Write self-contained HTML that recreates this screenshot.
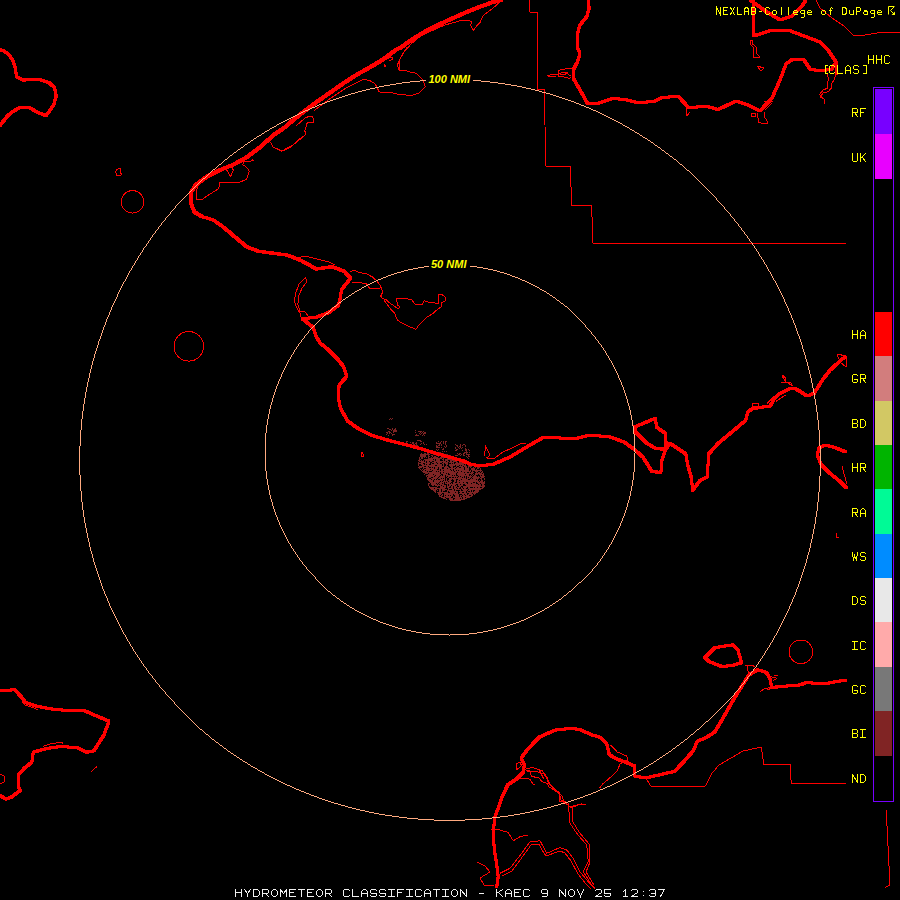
<!DOCTYPE html>
<html><head><meta charset="utf-8"><style>
html,body{margin:0;padding:0;background:#000;width:900px;height:900px;overflow:hidden;position:relative}
</style></head><body>
<svg width="900" height="900" viewBox="0 0 900 900" style="position:absolute;left:0;top:0"><path d="M435,452h3v1h-3zM439,452h2v1h-2zM464,452h4v1h-4zM469,452h1v1h-1zM421,453h1v1h-1zM424,453h2v1h-2zM427,453h2v1h-2zM430,453h4v1h-4zM435,453h2v1h-2zM440,453h4v1h-4zM457,453h1v1h-1zM459,453h2v1h-2zM463,453h2v1h-2zM466,453h1v1h-1zM420,454h10v1h-10zM433,454h2v1h-2zM436,454h1v1h-1zM438,454h7v1h-7zM446,454h2v1h-2zM458,454h2v1h-2zM461,454h1v1h-1zM463,454h1v1h-1zM466,454h4v1h-4zM420,455h6v1h-6zM428,455h1v1h-1zM431,455h2v1h-2zM436,455h2v1h-2zM441,455h1v1h-1zM444,455h2v1h-2zM447,455h4v1h-4zM455,455h3v1h-3zM460,455h1v1h-1zM463,455h2v1h-2zM468,455h1v1h-1zM420,456h6v1h-6zM428,456h2v1h-2zM432,456h1v1h-1zM434,456h2v1h-2zM438,456h1v1h-1zM441,456h7v1h-7zM449,456h2v1h-2zM452,456h1v1h-1zM466,456h1v1h-1zM468,456h2v1h-2zM419,457h1v1h-1zM421,457h2v1h-2zM424,457h1v1h-1zM426,457h1v1h-1zM428,457h1v1h-1zM431,457h1v1h-1zM433,457h5v1h-5zM440,457h7v1h-7zM448,457h1v1h-1zM450,457h2v1h-2zM454,457h1v1h-1zM456,457h1v1h-1zM467,457h1v1h-1zM419,458h1v1h-1zM421,458h2v1h-2zM428,458h14v1h-14zM443,458h1v1h-1zM447,458h2v1h-2zM450,458h4v1h-4zM455,458h3v1h-3zM468,458h1v1h-1zM419,459h2v1h-2zM424,459h9v1h-9zM434,459h1v1h-1zM436,459h4v1h-4zM442,459h2v1h-2zM445,459h8v1h-8zM454,459h3v1h-3zM458,459h3v1h-3zM418,460h2v1h-2zM421,460h1v1h-1zM423,460h1v1h-1zM425,460h10v1h-10zM436,460h4v1h-4zM443,460h1v1h-1zM445,460h3v1h-3zM450,460h8v1h-8zM459,460h1v1h-1zM462,460h2v1h-2zM419,461h5v1h-5zM425,461h1v1h-1zM427,461h2v1h-2zM430,461h2v1h-2zM434,461h12v1h-12zM447,461h2v1h-2zM450,461h2v1h-2zM453,461h4v1h-4zM461,461h3v1h-3zM465,461h2v1h-2zM418,462h1v1h-1zM421,462h5v1h-5zM427,462h3v1h-3zM432,462h4v1h-4zM437,462h5v1h-5zM443,462h5v1h-5zM449,462h5v1h-5zM456,462h2v1h-2zM459,462h3v1h-3zM464,462h4v1h-4zM418,463h5v1h-5zM425,463h5v1h-5zM431,463h1v1h-1zM434,463h3v1h-3zM438,463h2v1h-2zM442,463h2v1h-2zM445,463h3v1h-3zM451,463h1v1h-1zM453,463h1v1h-1zM455,463h14v1h-14zM470,463h2v1h-2zM418,464h1v1h-1zM421,464h3v1h-3zM425,464h1v1h-1zM427,464h2v1h-2zM431,464h11v1h-11zM443,464h1v1h-1zM446,464h2v1h-2zM449,464h15v1h-15zM465,464h1v1h-1zM467,464h2v1h-2zM470,464h4v1h-4zM418,465h1v1h-1zM422,465h13v1h-13zM437,465h5v1h-5zM443,465h1v1h-1zM446,465h1v1h-1zM449,465h6v1h-6zM456,465h3v1h-3zM460,465h1v1h-1zM462,465h4v1h-4zM468,465h3v1h-3zM472,465h1v1h-1zM474,465h2v1h-2zM419,466h5v1h-5zM426,466h2v1h-2zM429,466h15v1h-15zM445,466h3v1h-3zM450,466h3v1h-3zM456,466h1v1h-1zM459,466h4v1h-4zM464,466h3v1h-3zM468,466h4v1h-4zM475,466h4v1h-4zM418,467h4v1h-4zM423,467h6v1h-6zM431,467h1v1h-1zM433,467h1v1h-1zM435,467h3v1h-3zM439,467h3v1h-3zM444,467h5v1h-5zM451,467h2v1h-2zM454,467h2v1h-2zM457,467h2v1h-2zM461,467h3v1h-3zM465,467h2v1h-2zM468,467h1v1h-1zM470,467h1v1h-1zM473,467h1v1h-1zM475,467h1v1h-1zM477,467h3v1h-3zM419,468h1v1h-1zM423,468h1v1h-1zM426,468h8v1h-8zM435,468h3v1h-3zM439,468h3v1h-3zM444,468h3v1h-3zM448,468h7v1h-7zM456,468h8v1h-8zM465,468h4v1h-4zM471,468h4v1h-4zM477,468h2v1h-2zM480,468h1v1h-1zM420,469h1v1h-1zM422,469h1v1h-1zM424,469h6v1h-6zM431,469h6v1h-6zM439,469h1v1h-1zM441,469h9v1h-9zM451,469h2v1h-2zM454,469h10v1h-10zM465,469h4v1h-4zM471,469h4v1h-4zM476,469h1v1h-1zM480,469h1v1h-1zM421,470h1v1h-1zM423,470h2v1h-2zM426,470h6v1h-6zM433,470h7v1h-7zM441,470h2v1h-2zM444,470h7v1h-7zM452,470h1v1h-1zM454,470h2v1h-2zM457,470h1v1h-1zM459,470h10v1h-10zM470,470h1v1h-1zM472,470h10v1h-10zM422,471h5v1h-5zM428,471h1v1h-1zM432,471h4v1h-4zM437,471h1v1h-1zM439,471h15v1h-15zM455,471h6v1h-6zM462,471h9v1h-9zM472,471h1v1h-1zM475,471h3v1h-3zM480,471h1v1h-1zM482,471h1v1h-1zM423,472h17v1h-17zM441,472h2v1h-2zM444,472h13v1h-13zM458,472h6v1h-6zM465,472h2v1h-2zM469,472h1v1h-1zM471,472h3v1h-3zM476,472h1v1h-1zM478,472h2v1h-2zM481,472h2v1h-2zM425,473h3v1h-3zM429,473h11v1h-11zM441,473h5v1h-5zM447,473h1v1h-1zM449,473h7v1h-7zM457,473h16v1h-16zM475,473h7v1h-7zM483,473h1v1h-1zM424,474h1v1h-1zM428,474h5v1h-5zM434,474h7v1h-7zM443,474h5v1h-5zM450,474h6v1h-6zM457,474h8v1h-8zM466,474h3v1h-3zM471,474h1v1h-1zM473,474h1v1h-1zM475,474h3v1h-3zM479,474h5v1h-5zM426,475h9v1h-9zM436,475h4v1h-4zM441,475h1v1h-1zM443,475h2v1h-2zM446,475h6v1h-6zM453,475h1v1h-1zM455,475h1v1h-1zM458,475h11v1h-11zM470,475h1v1h-1zM472,475h1v1h-1zM474,475h2v1h-2zM480,475h1v1h-1zM482,475h2v1h-2zM426,476h1v1h-1zM428,476h6v1h-6zM435,476h4v1h-4zM440,476h5v1h-5zM446,476h1v1h-1zM448,476h10v1h-10zM459,476h1v1h-1zM461,476h3v1h-3zM465,476h1v1h-1zM467,476h5v1h-5zM473,476h4v1h-4zM478,476h1v1h-1zM480,476h5v1h-5zM427,477h4v1h-4zM433,477h5v1h-5zM439,477h6v1h-6zM447,477h2v1h-2zM451,477h1v1h-1zM454,477h1v1h-1zM456,477h1v1h-1zM458,477h4v1h-4zM463,477h1v1h-1zM465,477h1v1h-1zM467,477h1v1h-1zM469,477h2v1h-2zM472,477h8v1h-8zM481,477h3v1h-3zM427,478h2v1h-2zM431,478h6v1h-6zM438,478h3v1h-3zM442,478h1v1h-1zM444,478h1v1h-1zM446,478h1v1h-1zM449,478h17v1h-17zM467,478h3v1h-3zM471,478h1v1h-1zM473,478h6v1h-6zM480,478h2v1h-2zM484,478h1v1h-1zM427,479h4v1h-4zM432,479h2v1h-2zM435,479h1v1h-1zM437,479h1v1h-1zM440,479h5v1h-5zM446,479h1v1h-1zM449,479h3v1h-3zM453,479h3v1h-3zM458,479h3v1h-3zM462,479h6v1h-6zM470,479h6v1h-6zM477,479h1v1h-1zM481,479h1v1h-1zM484,479h1v1h-1zM428,480h5v1h-5zM434,480h9v1h-9zM444,480h1v1h-1zM446,480h1v1h-1zM448,480h3v1h-3zM454,480h2v1h-2zM457,480h2v1h-2zM460,480h18v1h-18zM479,480h1v1h-1zM481,480h2v1h-2zM429,481h4v1h-4zM434,481h6v1h-6zM441,481h1v1h-1zM443,481h5v1h-5zM449,481h3v1h-3zM454,481h2v1h-2zM457,481h22v1h-22zM480,481h3v1h-3zM484,481h1v1h-1zM430,482h9v1h-9zM440,482h4v1h-4zM445,482h1v1h-1zM447,482h4v1h-4zM453,482h2v1h-2zM457,482h2v1h-2zM460,482h3v1h-3zM464,482h2v1h-2zM468,482h5v1h-5zM475,482h1v1h-1zM477,482h8v1h-8zM428,483h2v1h-2zM431,483h5v1h-5zM437,483h1v1h-1zM439,483h3v1h-3zM443,483h1v1h-1zM445,483h5v1h-5zM451,483h1v1h-1zM453,483h14v1h-14zM468,483h3v1h-3zM472,483h4v1h-4zM478,483h2v1h-2zM481,483h4v1h-4zM428,484h1v1h-1zM431,484h6v1h-6zM438,484h1v1h-1zM440,484h4v1h-4zM447,484h1v1h-1zM449,484h7v1h-7zM458,484h2v1h-2zM461,484h2v1h-2zM465,484h13v1h-13zM479,484h2v1h-2zM482,484h2v1h-2zM428,485h1v1h-1zM432,485h2v1h-2zM435,485h6v1h-6zM442,485h4v1h-4zM447,485h1v1h-1zM449,485h2v1h-2zM452,485h3v1h-3zM456,485h1v1h-1zM458,485h5v1h-5zM466,485h15v1h-15zM482,485h3v1h-3zM429,486h1v1h-1zM437,486h1v1h-1zM440,486h3v1h-3zM444,486h2v1h-2zM447,486h3v1h-3zM451,486h2v1h-2zM454,486h3v1h-3zM459,486h2v1h-2zM463,486h22v1h-22zM429,487h8v1h-8zM440,487h6v1h-6zM447,487h2v1h-2zM451,487h2v1h-2zM454,487h2v1h-2zM457,487h3v1h-3zM461,487h1v1h-1zM463,487h4v1h-4zM468,487h2v1h-2zM473,487h1v1h-1zM475,487h2v1h-2zM478,487h2v1h-2zM482,487h2v1h-2zM430,488h4v1h-4zM435,488h10v1h-10zM448,488h5v1h-5zM454,488h3v1h-3zM458,488h1v1h-1zM461,488h2v1h-2zM464,488h2v1h-2zM468,488h15v1h-15zM431,489h6v1h-6zM439,489h2v1h-2zM442,489h5v1h-5zM448,489h1v1h-1zM452,489h2v1h-2zM455,489h6v1h-6zM462,489h6v1h-6zM469,489h12v1h-12zM433,490h3v1h-3zM437,490h1v1h-1zM439,490h2v1h-2zM442,490h3v1h-3zM447,490h7v1h-7zM455,490h1v1h-1zM460,490h1v1h-1zM463,490h4v1h-4zM468,490h3v1h-3zM472,490h1v1h-1zM475,490h4v1h-4zM434,491h2v1h-2zM439,491h2v1h-2zM442,491h1v1h-1zM447,491h1v1h-1zM449,491h9v1h-9zM459,491h7v1h-7zM467,491h1v1h-1zM470,491h1v1h-1zM472,491h1v1h-1zM474,491h5v1h-5zM435,492h1v1h-1zM437,492h11v1h-11zM450,492h5v1h-5zM456,492h2v1h-2zM460,492h2v1h-2zM464,492h2v1h-2zM467,492h11v1h-11zM438,493h4v1h-4zM444,493h14v1h-14zM459,493h8v1h-8zM469,493h3v1h-3zM473,493h3v1h-3zM438,494h3v1h-3zM442,494h1v1h-1zM444,494h9v1h-9zM454,494h5v1h-5zM462,494h2v1h-2zM465,494h2v1h-2zM468,494h5v1h-5zM474,494h1v1h-1zM439,495h1v1h-1zM441,495h2v1h-2zM444,495h1v1h-1zM446,495h2v1h-2zM449,495h1v1h-1zM451,495h2v1h-2zM455,495h4v1h-4zM460,495h2v1h-2zM463,495h2v1h-2zM466,495h3v1h-3zM471,495h2v1h-2zM439,496h3v1h-3zM444,496h8v1h-8zM453,496h1v1h-1zM455,496h4v1h-4zM460,496h1v1h-1zM462,496h10v1h-10zM441,497h4v1h-4zM446,497h5v1h-5zM453,497h9v1h-9zM463,497h2v1h-2zM466,497h4v1h-4zM443,498h3v1h-3zM449,498h4v1h-4zM455,498h5v1h-5zM461,498h1v1h-1zM463,498h4v1h-4zM446,499h1v1h-1zM449,499h4v1h-4zM454,499h11v1h-11zM450,500h11v1h-11zM417,440h4v1h-4zM406,441h2v1h-2zM420,441h2v1h-2zM438,441h1v1h-1zM441,441h1v1h-1zM443,441h1v1h-1zM445,441h2v1h-2zM406,442h1v1h-1zM410,442h1v1h-1zM412,442h2v1h-2zM416,442h1v1h-1zM423,442h1v1h-1zM436,442h1v1h-1zM440,442h1v1h-1zM443,442h1v1h-1zM445,442h1v1h-1zM406,443h1v1h-1zM412,443h2v1h-2zM415,443h2v1h-2zM421,443h1v1h-1zM423,443h1v1h-1zM436,443h5v1h-5zM443,443h1v1h-1zM445,443h1v1h-1zM404,444h2v1h-2zM407,444h4v1h-4zM413,444h2v1h-2zM416,444h1v1h-1zM420,444h1v1h-1zM424,444h1v1h-1zM426,444h1v1h-1zM439,444h1v1h-1zM441,444h1v1h-1zM445,444h1v1h-1zM455,444h1v1h-1zM460,444h1v1h-1zM463,444h2v1h-2zM410,445h2v1h-2zM414,445h4v1h-4zM436,445h1v1h-1zM438,445h2v1h-2zM441,445h1v1h-1zM446,445h1v1h-1zM456,445h2v1h-2zM460,445h1v1h-1zM462,445h1v1h-1zM465,445h1v1h-1zM418,446h1v1h-1zM436,446h2v1h-2zM444,446h1v1h-1zM446,446h1v1h-1zM457,446h1v1h-1zM459,446h2v1h-2zM465,446h1v1h-1zM387,428h2v1h-2zM392,428h1v1h-1zM395,428h1v1h-1zM389,429h2v1h-2zM392,429h1v1h-1zM394,429h2v1h-2zM391,430h1v1h-1zM393,430h4v1h-4zM415,430h1v1h-1zM388,431h2v1h-2zM393,431h4v1h-4zM418,431h4v1h-4zM423,431h1v1h-1zM386,432h2v1h-2zM389,432h2v1h-2zM393,432h1v1h-1zM415,432h1v1h-1zM420,432h1v1h-1zM422,432h1v1h-1zM424,432h2v1h-2zM387,433h1v1h-1zM389,433h1v1h-1zM391,433h1v1h-1zM419,433h1v1h-1zM421,433h1v1h-1zM423,433h3v1h-3zM386,434h1v1h-1zM392,434h3v1h-3zM416,434h1v1h-1zM420,434h1v1h-1zM423,434h1v1h-1zM388,435h1v1h-1zM392,435h1v1h-1zM415,435h4v1h-4zM422,435h1v1h-1zM424,435h1v1h-1zM436,447h4v1h-4zM441,447h1v1h-1zM445,447h1v1h-1zM455,447h1v1h-1zM458,447h1v1h-1zM460,447h1v1h-1zM462,447h1v1h-1zM443,448h1v1h-1zM455,448h1v1h-1zM459,448h1v1h-1zM461,448h1v1h-1zM465,448h1v1h-1zM436,449h1v1h-1zM438,449h1v1h-1zM442,449h2v1h-2zM456,449h2v1h-2zM465,449h2v1h-2zM468,449h1v1h-1zM437,450h1v1h-1zM455,450h2v1h-2zM462,450h1v1h-1zM465,450h2v1h-2zM469,450h1v1h-1zM442,451h1v1h-1zM444,451h1v1h-1zM446,451h1v1h-1zM466,451h1v1h-1zM390,418h1v1h-1zM392,418h1v1h-1zM389,419h1v1h-1zM391,419h1v1h-1z" fill="#802424" shape-rendering="crispEdges"/><g fill="none" stroke="#ff0000" stroke-linejoin="round" stroke-linecap="round" shape-rendering="crispEdges"><g id="thk"><path d="M0.0,49.6 L3.7,50.8 L8.6,54.4 L12.2,59.3 L14.7,65.5 L15.9,72.2 L17.1,77.0 L23.2,80.1 L31.8,79.5 L40.3,79.9 L48.9,82.6 L54.4,87.5 L56.2,96.0 L53.8,104.6 L48.9,111.9 L45.8,115.6 L37.9,112.5 L29.3,107.6 L19.6,107.6 L12.2,111.9 L7.3,116.2 L0.0,125.4" stroke-width="1"/><path d="M501.3,0.0 L493.3,2.0 L480.0,6.7 L466.7,12.0 L453.3,18.0 L440.0,24.0 L426.7,30.7 L413.3,38.7 L400.0,48.0 L396.7,49.3 L383.3,59.3 L370.0,67.3 L356.7,74.7 L343.3,83.3 L330.0,92.7 L316.7,102.0 L303.3,112.0 L290.0,122.7 L286.7,126.0 L273.3,135.3 L260.0,147.3 L246.7,157.3 L233.3,164.7 L220.0,170.0 L206.7,176.7 L196.0,184.7 L190.7,192.7 L191.1,203.3 L194.4,212.2 L202.2,216.7 L213.3,220.0 L224.4,227.8 L233.3,235.6 L246.7,246.7 L257.8,251.1 L274.4,253.4 L286.9,255.0 L300.9,260.4 L316.4,269.0 L332.0,266.7 L344.4,271.3 L350.6,278.3 L341.3,290.0 L340.5,297.8 L338.2,305.5 L328.9,312.5 L316.4,317.2 L302.4,318.8 L307.1,322.6 L313.0,327.2 L315.9,335.9 L320.2,343.1 L328.9,350.3 L337.5,359.0 L343.3,366.2 L346.9,376.3 L340.4,383.5 L338.3,387.9 L339.0,400.9 L340.4,408.1 L347.7,421.1 L357.8,428.3 L372.2,435.5 L389.5,440.6 L404.0,444.2 L420.0,448.5 L441.7,455.0 L463.0,460.8 L470.0,464.0 L480.0,466.0 L494.0,464.0 L510.0,457.0 L530.0,445.0 L544.0,437.0 L560.0,438.0 L574.0,439.0 L590.0,435.0 L610.0,437.0 L624.0,442.0 L634.2,449.3 L643.1,457.3 L652.0,471.6 L660.9,472.4 L661.8,460.9 L665.3,450.2 L669.8,443.1 L685.8,453.8 L687.6,464.4 L691.1,476.9 L692.9,490.2 L700.0,480.4 L707.1,476.9 L708.9,453.8 L718.0,443.5 L735.5,428.9 L745.5,420.5 L748.0,412.0 L752.0,409.0 L760.0,407.3 L770.0,406.3 L774.7,398.0 L780.0,393.3 L790.0,388.7 L794.0,388.0 L800.0,391.3 L806.9,396.0 L814.1,393.4 L823.0,379.1 L830.1,370.2 L842.5,358.7 L846.1,356.9" stroke-width="1"/><path d="M634.2,427.1 L655.6,418.2 L656.4,427.1 L665.3,433.3 L666.2,444.9 L664.4,449.3 L655.6,448.4 L646.7,443.1 L636.0,432.4 L634.2,427.1" stroke-width="1"/><path d="M588.3,0.0 L589.2,8.3 L586.7,16.7 L580.0,25.0 L577.5,33.3 L577.5,48.3 L580.0,53.3 L577.5,61.7 L573.3,70.0 L573.3,78.3 L580.0,90.0 L587.5,103.3 L598.3,103.3 L613.3,98.3 L626.7,100.0 L636.7,102.5 L653.3,101.7 L661.7,97.5 L678.3,96.3 L689.0,108.0 L706.0,106.0 L718.0,109.6 L736.0,101.0 L748.0,105.0 L760.0,111.0 L772.0,98.0 L780.0,80.0 L786.0,64.0 L792.0,59.6 L804.0,60.0 L810.0,69.0 L820.0,71.0 L832.0,69.0 L836.0,62.0 L828.0,50.0 L820.0,42.0 L804.0,36.0 L788.0,30.0 L772.0,30.0 L760.0,34.0 L753.0,36.0 L754.0,20.0 L753.0,0.0" stroke-width="1"/><path d="M750.0,0.0 L764.0,10.0 L780.0,20.0 L792.0,16.0 L802.0,6.0 L806.0,0.0" stroke-width="1"/><path d="M846.1,452.1 L835.4,447.7 L824.7,445.0 L818.5,448.5 L817.6,455.7 L821.2,464.6 L830.1,473.5 L839.0,480.6 L846.1,487.7" stroke-width="1"/><path d="M706.0,656.4 L714.9,647.6 L732.7,644.9 L738.0,650.2 L741.6,662.7 L732.7,665.3 L722.0,666.6 L709.6,661.8 L704.2,657.3 L706.0,656.4" stroke-width="1"/><path d="M845.6,680.4 L837.6,681.3 L828.7,683.1 L818.0,684.0 L807.3,682.2 L800.2,684.9 L789.6,685.8 L778.9,686.7 L771.8,687.6 L770.0,678.7 L766.4,672.4 L757.6,669.8 L748.7,675.1 L734.4,698.2 L722.0,719.9 L714.7,732.0 L706.7,737.3 L697.3,741.3 L693.3,750.7 L685.3,760.0 L674.7,771.3 L660.0,774.7 L645.3,778.0 L634.7,776.0 L634.7,766.0 L626.7,762.7 L616.0,758.7 L609.3,754.7 L606.7,744.0 L600.0,737.3 L592.0,734.9 L579.5,729.4 L570.2,728.4 L554.7,730.2 L539.1,737.2 L526.7,750.4 L521.2,758.2 L524.3,764.4 L523.5,772.2 L517.3,778.4 L508.0,784.6 L501.8,797.1 L500.0,803.3 L495.0,816.7 L493.3,831.7 L494.2,848.3 L496.7,865.0 L498.3,876.7 L496.7,886.7" stroke-width="1"/><path d="M0.0,690.8 L5.8,690.8 L14.4,689.4 L21.7,697.3 L25.3,702.4 L36.1,706.0 L50.5,708.9 L65.0,710.3 L85.2,711.0 L95.3,715.4 L109.0,721.2 L104.0,734.9 L93.9,750.8 L86.6,752.2 L78.0,747.9 L60.6,746.4 L46.2,748.6 L33.2,752.2 L31.8,762.3 L24.5,768.1 L18.0,775.3 L18.0,785.4 L20.2,790.5 L11.6,797.0 L5.8,799.1 L0.0,795.5" stroke-width="1"/><path d="M501.3,0.0 L493.3,2.0 L480.0,6.7 L466.7,12.0 L453.3,18.0 L440.0,24.0 L426.7,30.7 L413.3,38.7 L400.0,48.0 L396.7,49.3 L383.3,59.3 L370.0,67.3 L356.7,74.7 L343.3,83.3 L330.0,92.7 L316.7,102.0 L303.3,112.0 L290.0,122.7 L286.7,126.0 L273.3,135.3 L260.0,147.3 L246.7,157.3 L233.3,164.7 L220.0,170.0 L206.7,176.7 L196.0,184.7 L190.7,192.7 L191.1,203.3 L194.4,212.2 L202.2,216.7" stroke-width="1.6"/><path d="M836.0,62.0 L836.0,74.0" stroke-width="1"/><path d="M224.4,227.8 L233.3,235.6 L246.7,246.7 L257.8,251.1 L274.4,253.4 L286.9,255.0 L300.9,260.4 L316.4,269.0 L332.0,266.7 L344.4,271.3 L350.6,278.3" stroke-width="1.3"/></g><use href="#thk" x="-1" y="-1"/><use href="#thk" x="-1" y="0"/><use href="#thk" x="-1" y="1"/><use href="#thk" x="0" y="-1"/><use href="#thk" x="0" y="1"/><use href="#thk" x="1" y="-1"/><use href="#thk" x="1" y="0"/><use href="#thk" x="1" y="1"/><path d="M529.5,0.0 L529.5,12.0 L537.0,12.0 L537.5,89.5 L544.5,89.5 L545.0,125.0 L545.5,166.0 L570.8,166.0 L571.2,205.5 L591.8,205.5 L592.5,243.0 L845.8,243.0" stroke-width="1" shape-rendering="crispEdges"/><path d="M816.0,0.0 L820.0,8.0 L832.0,18.0 L844.0,26.0 L854.0,36.0 L865.0,35.0 L880.0,32.5 L900.0,32.0" stroke-width="1" shape-rendering="crispEdges"/><path d="M675.0,786.0 L650.7,786.0 L646.7,779.3" stroke-width="1" shape-rendering="crispEdges"/><path d="M650.7,786.0 L705.3,786.0 L712.0,773.3 L718.7,765.3 L742.5,751.2 L761.2,747.0 L763.8,764.2 L790.0,764.2 L791.2,783.2 L845.8,783.2" stroke-width="1" shape-rendering="crispEdges"/><path d="M886.2,810.0 L890.0,885.0 L885.0,887.5" stroke-width="1" shape-rendering="crispEdges"/><path d="M498.7,2.7 L493.3,8.0 L482.7,16.0 L480.0,22.7 L476.0,26.7 L473.3,30.7 L470.7,25.3 L472.0,21.3 L462.7,20.0 L444.0,25.3 L420.0,36.0 L406.7,48.0 L400.0,58.7 L399.3,70.7 L406.0,70.7 L410.0,72.0 L416.0,73.3 L422.7,80.0 L425.3,86.7 L418.7,93.3 L412.0,95.3 L400.0,94.7 L391.3,92.7 L379.3,92.0 L375.3,84.0 L370.0,80.7 L363.3,79.3 L346.0,88.0 L330.0,98.7 L314.0,110.7" stroke-width="1" shape-rendering="crispEdges"/><path d="M410.0,46.0 L404.7,50.7 L400.7,57.3 L397.3,65.3 L399.3,70.7" stroke-width="1" shape-rendering="crispEdges"/><path d="M296.7,125.3 L306.0,117.3 L312.7,116.0 L314.0,122.7 L307.3,122.7 L304.7,130.7 L306.0,134.0 L299.3,140.0 L290.0,147.5 L282.5,151.0 L273.3,147.3 L270.7,142.0" stroke-width="1" shape-rendering="crispEdges"/><path d="M273.3,147.3 L281.3,151.3 L293.3,144.7 L300.0,138.7" stroke-width="1" shape-rendering="crispEdges"/><path d="M197.3,186.0 L196.0,199.3 L201.3,200.0 L208.0,195.3 L218.7,188.7 L220.0,182.0 L226.7,182.0 L240.0,182.0 L246.7,179.3 L249.3,171.3 L246.7,167.3 L242.7,164.7 L244.0,162.0 L253.3,160.7 L252.0,158.7" stroke-width="1" shape-rendering="crispEdges"/><path d="M226.7,170.0 L230.7,176.7 L233.3,170.0 L232.0,167.3" stroke-width="1" shape-rendering="crispEdges"/><path d="M118.3,168.5 L120.5,168.5 L120.5,173.0 L121.5,174.0 L120.5,175.5 L117.0,175.5 L116.0,173.0 L115.5,172.0 L116.5,170.0 L118.3,168.5" stroke-width="1" shape-rendering="crispEdges"/><path d="M305.6,277.2 L298.9,284.4 L295.6,293.3 L294.4,301.1 L296.7,307.8 L300.0,313.3 L301.1,317.8" stroke-width="1" shape-rendering="crispEdges"/><path d="M305.6,277.2 L306.7,282.2 L302.2,287.8 L298.9,295.6 L297.8,304.4 L300.0,311.1 L305.6,312.2 L307.8,315.6" stroke-width="1" shape-rendering="crispEdges"/><path d="M297.8,257.3 L307.1,256.5 L319.5,259.7 L328.9,262.0 L335.0,265.0" stroke-width="1" shape-rendering="crispEdges"/><path d="M350.7,271.3 L354.7,270.4 L360.0,272.7 L366.7,274.0 L372.0,276.7 L377.3,281.3 L380.0,285.3 L381.3,288.0 L382.7,292.0 L380.7,296.0 L382.7,298.7 L386.7,300.0 L389.3,302.7 L393.3,305.3 L396.0,307.3 L398.7,308.7 L400.0,306.7 L397.3,305.3 L396.7,298.7 L402.7,298.7 L406.7,298.7 L412.0,300.0 L414.7,304.0 L422.7,304.0 L424.0,300.7 L430.7,302.7 L438.7,303.3 L438.7,294.7 L441.3,294.0 L445.3,297.3 L446.0,300.7 L441.3,302.7 L441.3,306.7 L436.0,310.7 L433.3,313.3 L426.7,317.3 L422.7,321.3 L418.7,325.3 L416.0,329.3 L409.3,326.7 L401.3,322.7 L397.3,320.0 L394.7,313.3 L390.7,309.3 L384.0,300.0" stroke-width="1" shape-rendering="crispEdges"/><path d="M352.0,282.7 L360.0,282.7 L366.7,284.0 L369.3,288.0 L376.0,288.7 L380.0,288.0" stroke-width="1" shape-rendering="crispEdges"/><path d="M525.1,769.1 L532.9,767.5 L542.2,770.7 L546.9,776.9 L548.4,783.1 L554.7,789.3 L559.3,792.4 L560.9,800.2 L561.7,800.0 L568.3,803.3 L570.0,823.3 L576.7,833.3 L586.7,845.0 L588.3,861.7 L583.3,871.7 L591.7,885.0" stroke-width="1" shape-rendering="crispEdges"/><path d="M527.0,772.0 L535.0,771.0 L544.0,774.0 L548.0,780.0 L551.0,786.0 L557.0,791.0 L562.0,796.0 L564.0,802.0 L572.0,808.0 L573.0,822.0 L579.0,832.0 L589.0,844.0 L590.0,862.0 L586.0,872.0 L594.0,885.0" stroke-width="1" shape-rendering="crispEdges"/><path d="M570.0,806.7 L576.7,805.0 L585.0,804.2" stroke-width="1" shape-rendering="crispEdges"/><path d="M519.8,779.0 L526.9,778.1 L530.4,779.9 L533.1,784.3 L534.9,784.8" stroke-width="1" shape-rendering="crispEdges"/><path d="M526.0,771.0 L529.6,770.6 L531.3,776.3 L539.3,778.1 L542.0,781.7 L547.3,783.4 L549.1,787.0 L553.6,789.7 L558.9,793.2 L559.8,801.2 L563.3,802.1" stroke-width="1" shape-rendering="crispEdges"/><path d="M539.3,770.1 L542.0,775.4 L543.8,779.0" stroke-width="1" shape-rendering="crispEdges"/><path d="M572.2,807.4 L581.1,803.9 L585.6,804.3" stroke-width="1" shape-rendering="crispEdges"/><path d="M491.7,829.2 L500.0,830.0 L508.3,832.5 L511.7,838.3 L513.3,840.8 L520.0,836.7 L528.3,835.0" stroke-width="1" shape-rendering="crispEdges"/><path d="M500.0,873.3 L510.0,868.3 L521.7,853.3 L530.0,841.7 L540.0,840.8 L543.3,846.7 L546.7,853.3 L560.0,847.5 L566.7,850.0 L573.3,858.3 L580.0,871.7 L588.3,881.7 L595.0,888.3" stroke-width="1" shape-rendering="crispEdges"/><path d="M502.0,876.0 L512.0,871.0 L523.0,856.0 L531.0,845.0 L539.0,844.0 L542.0,850.0 L546.0,856.0 L560.0,851.0 L565.0,853.0 L571.0,861.0 L578.0,874.0 L586.0,884.0 L591.0,889.0" stroke-width="1" shape-rendering="crispEdges"/><path d="M610.7,745.3 L617.3,752.0 L626.7,756.0 L628.0,760.0 L620.0,764.0 L617.3,770.7 L612.0,776.0 L602.7,784.0 L600.0,787.5" stroke-width="1" shape-rendering="crispEdges"/><path d="M516.2,763.9 L519.8,762.1 L521.6,765.7 L516.2,770.1 L516.2,763.9" stroke-width="1" shape-rendering="crispEdges"/><path d="M477.0,862.0 L485.0,866.0 L490.0,872.0 L480.0,878.0 L484.0,885.0 L494.0,886.0" stroke-width="1" shape-rendering="crispEdges"/><path d="M91.0,771.7 L96.8,766.6" stroke-width="1" shape-rendering="crispEdges"/><path d="M0.0,774.0 L4.0,776.0 L4.3,782.0 L0.0,784.0" stroke-width="1" shape-rendering="crispEdges"/><path d="M362.0,452.0 L364.0,456.0 L362.0,457.0 L361.0,454.0 L362.0,452.0" stroke-width="1" shape-rendering="crispEdges"/><path d="M847.0,484.0 L843.0,470.0 L842.0,466.0" stroke-width="1" shape-rendering="crispEdges"/><path d="M837.0,354.0 L846.0,356.0 L846.0,367.0 L840.0,362.0 L837.0,354.0" stroke-width="1" shape-rendering="crispEdges"/><path d="M782.0,376.0 L786.0,382.0 L793.0,386.0" stroke-width="1" shape-rendering="crispEdges"/><path d="M757.3,113.0 L758.7,122.7 L768.0,124.0 L766.7,120.0 L764.0,117.3 L764.0,112.0" stroke-width="1" shape-rendering="crispEdges"/><path d="M750.5,41.0 L751.0,45.0 L753.3,47.0 L753.3,58.0 L760.0,57.3 L756.0,53.3 L756.0,46.7 L752.5,44.0 L752.0,40.0 L750.5,41.0" stroke-width="1" shape-rendering="crispEdges"/><path d="M757.0,66.0 L764.0,68.0 L761.0,71.0 L757.0,66.0" stroke-width="1" shape-rendering="crispEdges"/><path d="M751.0,113.0 L755.0,113.0 L755.0,116.7 L751.0,116.7 L751.0,113.0" stroke-width="1" shape-rendering="crispEdges"/><path d="M764.0,101.0 L768.0,104.0 L773.0,101.0" stroke-width="1" shape-rendering="crispEdges"/><path d="M765.0,110.0 L769.0,106.0 L772.0,103.0" stroke-width="1" shape-rendering="crispEdges"/><path d="M547.0,75.3 L552.0,74.8 L558.1,74.4" stroke-width="1" shape-rendering="crispEdges"/><path d="M558.7,76.0 L558.7,70.6 L562.0,69.2 L567.0,68.9 L572.0,68.3" stroke-width="1" shape-rendering="crispEdges"/><path d="M558.1,76.4 L563.1,76.7 L568.7,78.3 L570.9,77.8" stroke-width="1" shape-rendering="crispEdges"/><path d="M559.0,73.5 L563.0,72.5 L567.0,73.0 L569.0,75.0 L571.0,76.0" stroke-width="1" shape-rendering="crispEdges"/><path d="M548.0,76.0 L556.0,76.5" stroke-width="1" shape-rendering="crispEdges"/><path d="M560.0,74.0 L565.0,74.5 L568.0,72.0" stroke-width="1" shape-rendering="crispEdges"/><path d="M485.0,445.0 L490.0,455.0 L486.7,458.0 L495.0,458.0 L503.3,451.7 L511.7,448.3 L520.0,444.0 L526.0,443.0" stroke-width="1" shape-rendering="crispEdges"/><path d="M486.0,446.0 L484.0,456.0" stroke-width="1" shape-rendering="crispEdges"/><path d="M836.0,533.0 L837.0,538.0 L839.0,537.0" stroke-width="1" shape-rendering="crispEdges"/><path d="M686.0,107.0 L687.0,116.0 L690.0,112.0" stroke-width="1" shape-rendering="crispEdges"/><path d="M752.7,403.0 L758.0,403.0 L758.0,406.7 L752.7,406.7 L752.7,403.0" stroke-width="1" shape-rendering="crispEdges"/><path d="M767.3,403.3 L773.3,397.3 L776.0,395.0" stroke-width="1" shape-rendering="crispEdges"/><path d="M776.0,401.3 L785.3,395.3" stroke-width="1" shape-rendering="crispEdges"/><path d="M782.0,375.0 L786.0,378.0 L785.0,383.0 L781.3,382.3 L790.7,382.3 L792.7,386.0" stroke-width="1" shape-rendering="crispEdges"/><path d="M827.7,73.9 L828.3,79.4 L827.7,83.1 L828.0,88.0 L823.4,89.8 L819.8,94.1 L820.4,97.1 L824.0,99.0 L824.0,103.2" stroke-width="1" shape-rendering="crispEdges"/><path d="M835.6,74.5 L834.4,79.4 L831.4,83.7 L831.4,88.0 L828.3,91.6 L823.0,93.0 L821.0,96.0 L825.0,100.0 L824.5,104.0" stroke-width="1" shape-rendering="crispEdges"/><path d="M21.7,702.0 L25.0,705.0 L31.0,707.0 L37.5,709.5" stroke-width="1" shape-rendering="crispEdges"/><path d="M43.3,746.4 L50.0,744.0 L56.0,743.0 L62.0,742.1 L63.0,744.0" stroke-width="1" shape-rendering="crispEdges"/><path d="M745.6,665.6 L750.0,665.2 L753.9,666.1 L756.0,668.0" stroke-width="1" shape-rendering="crispEdges"/><path d="M747.2,666.7 L748.3,672.8 L750.0,675.0" stroke-width="1" shape-rendering="crispEdges"/><path d="M760.0,691.7 L764.0,689.0 L770.6,687.2" stroke-width="1" shape-rendering="crispEdges"/><path d="M766.7,690.0 L771.0,688.5" stroke-width="1" shape-rendering="crispEdges"/><path d="M771.0,676.7 L776.7,678.3 L773.0,681.0" stroke-width="1" shape-rendering="crispEdges"/><path d="M774.4,675.0 L777.8,675.6" stroke-width="1" shape-rendering="crispEdges"/><path d="M384.0,64.5 L386.0,65.5 L385.0,67.0 L384.0,64.5" stroke-width="1" shape-rendering="crispEdges"/><path d="M388.0,58.5 L392.0,57.0 L393.0,59.5 L389.0,60.5" stroke-width="1" shape-rendering="crispEdges"/><circle cx="132.5" cy="201.8" r="11.2" stroke-width="1"/><circle cx="188.8" cy="346.3" r="14.8" stroke-width="1"/><circle cx="800.9" cy="651.8" r="11.8" stroke-width="1"/></g><g fill="none" stroke="#ffaa80" stroke-width="1" shape-rendering="crispEdges"><path d="M79,461h1v1h-1zM820,461h1v1h-1zM79,460h1v1h-1zM820,460h1v1h-1zM79,459h1v1h-1zM820,459h1v1h-1zM79,458h1v1h-1zM820,458h1v1h-1zM79,457h1v1h-1zM820,457h1v1h-1zM79,456h1v1h-1zM820,456h1v1h-1zM79,455h1v1h-1zM820,455h1v1h-1zM79,454h1v1h-1zM820,454h1v1h-1zM79,453h1v1h-1zM820,453h1v1h-1zM79,452h1v1h-1zM820,452h1v1h-1zM79,451h1v1h-1zM820,451h1v1h-1zM79,450h1v1h-1zM820,450h1v1h-1zM79,449h1v1h-1zM820,449h1v1h-1zM79,448h1v1h-1zM820,448h1v1h-1zM79,447h1v1h-1zM820,447h1v1h-1zM79,446h1v1h-1zM820,446h1v1h-1zM80,445h1v1h-1zM819,445h1v1h-1zM80,444h1v1h-1zM819,444h1v1h-1zM80,443h1v1h-1zM819,443h1v1h-1zM80,442h1v1h-1zM819,442h1v1h-1zM80,441h1v1h-1zM819,441h1v1h-1zM80,440h1v1h-1zM819,440h1v1h-1zM80,439h1v1h-1zM819,439h1v1h-1zM80,438h1v1h-1zM819,438h1v1h-1zM80,437h1v1h-1zM819,437h1v1h-1zM80,436h1v1h-1zM819,436h1v1h-1zM80,435h1v1h-1zM819,435h1v1h-1zM80,434h1v1h-1zM819,434h1v1h-1zM80,433h1v1h-1zM819,433h1v1h-1zM80,432h1v1h-1zM819,432h1v1h-1zM80,431h1v1h-1zM819,431h1v1h-1zM80,430h1v1h-1zM819,430h1v1h-1zM81,429h1v1h-1zM818,429h1v1h-1zM81,428h1v1h-1zM818,428h1v1h-1zM81,427h1v1h-1zM818,427h1v1h-1zM81,426h1v1h-1zM818,426h1v1h-1zM81,425h1v1h-1zM818,425h1v1h-1zM81,424h1v1h-1zM818,424h1v1h-1zM81,423h1v1h-1zM818,423h1v1h-1zM81,422h1v1h-1zM818,422h1v1h-1zM81,421h1v1h-1zM818,421h1v1h-1zM81,420h1v1h-1zM818,420h1v1h-1zM81,419h1v1h-1zM817,419h1v1h-1zM82,418h1v1h-1zM817,418h1v1h-1zM82,417h1v1h-1zM817,417h1v1h-1zM82,416h1v1h-1zM817,416h1v1h-1zM82,415h1v1h-1zM817,415h1v1h-1zM82,414h1v1h-1zM817,414h1v1h-1zM82,413h1v1h-1zM817,413h1v1h-1zM82,412h1v1h-1zM817,412h1v1h-1zM82,411h1v1h-1zM816,411h1v1h-1zM83,410h1v1h-1zM816,410h1v1h-1zM83,409h1v1h-1zM816,409h1v1h-1zM83,408h1v1h-1zM816,408h1v1h-1zM83,407h1v1h-1zM816,407h1v1h-1zM83,406h1v1h-1zM816,406h1v1h-1zM83,405h1v1h-1zM816,405h1v1h-1zM83,404h1v1h-1zM815,404h1v1h-1zM84,403h1v1h-1zM815,403h1v1h-1zM84,402h1v1h-1zM815,402h1v1h-1zM84,401h1v1h-1zM815,401h1v1h-1zM84,400h1v1h-1zM815,400h1v1h-1zM84,399h1v1h-1zM815,399h1v1h-1zM84,398h1v1h-1zM814,398h1v1h-1zM85,397h1v1h-1zM814,397h1v1h-1zM85,396h1v1h-1zM814,396h1v1h-1zM85,395h1v1h-1zM814,395h1v1h-1zM85,394h1v1h-1zM814,394h1v1h-1zM85,393h1v1h-1zM814,393h1v1h-1zM85,392h1v1h-1zM813,392h1v1h-1zM86,391h1v1h-1zM813,391h1v1h-1zM86,390h1v1h-1zM813,390h1v1h-1zM86,389h1v1h-1zM813,389h1v1h-1zM86,388h1v1h-1zM813,388h1v1h-1zM86,387h1v1h-1zM812,387h1v1h-1zM87,386h1v1h-1zM812,386h1v1h-1zM87,385h1v1h-1zM812,385h1v1h-1zM87,384h1v1h-1zM812,384h1v1h-1zM87,383h1v1h-1zM812,383h1v1h-1zM87,382h1v1h-1zM811,382h1v1h-1zM88,381h1v1h-1zM811,381h1v1h-1zM88,380h1v1h-1zM811,380h1v1h-1zM88,379h1v1h-1zM811,379h1v1h-1zM88,378h1v1h-1zM811,378h1v1h-1zM89,377h1v1h-1zM810,377h1v1h-1zM89,376h1v1h-1zM810,376h1v1h-1zM89,375h1v1h-1zM810,375h1v1h-1zM89,374h1v1h-1zM810,374h1v1h-1zM89,373h1v1h-1zM809,373h1v1h-1zM90,372h1v1h-1zM809,372h1v1h-1zM90,371h1v1h-1zM809,371h1v1h-1zM90,370h1v1h-1zM809,370h1v1h-1zM90,369h1v1h-1zM808,369h1v1h-1zM91,368h1v1h-1zM808,368h1v1h-1zM91,367h1v1h-1zM808,367h1v1h-1zM91,366h1v1h-1zM808,366h1v1h-1zM91,365h1v1h-1zM807,365h1v1h-1zM92,364h1v1h-1zM807,364h1v1h-1zM92,363h1v1h-1zM807,363h1v1h-1zM92,362h1v1h-1zM807,362h1v1h-1zM92,361h1v1h-1zM806,361h1v1h-1zM93,360h1v1h-1zM806,360h1v1h-1zM93,359h1v1h-1zM806,359h1v1h-1zM93,358h1v1h-1zM805,358h1v1h-1zM94,357h1v1h-1zM805,357h1v1h-1zM94,356h1v1h-1zM805,356h1v1h-1zM94,355h1v1h-1zM805,355h1v1h-1zM94,354h1v1h-1zM804,354h1v1h-1zM95,353h1v1h-1zM804,353h1v1h-1zM95,352h1v1h-1zM804,352h1v1h-1zM95,351h1v1h-1zM803,351h1v1h-1zM96,350h1v1h-1zM803,350h1v1h-1zM96,349h1v1h-1zM803,349h1v1h-1zM96,348h1v1h-1zM802,348h1v1h-1zM97,347h1v1h-1zM802,347h1v1h-1zM97,346h1v1h-1zM802,346h1v1h-1zM97,345h1v1h-1zM802,345h1v1h-1zM98,344h1v1h-1zM801,344h1v1h-1zM98,343h1v1h-1zM801,343h1v1h-1zM98,342h1v1h-1zM801,342h1v1h-1zM98,341h1v1h-1zM800,341h1v1h-1zM99,340h1v1h-1zM800,340h1v1h-1zM99,339h1v1h-1zM800,339h1v1h-1zM100,338h1v1h-1zM799,338h1v1h-1zM100,337h1v1h-1zM799,337h1v1h-1zM100,336h1v1h-1zM799,336h1v1h-1zM101,335h1v1h-1zM798,335h1v1h-1zM101,334h1v1h-1zM798,334h1v1h-1zM101,333h1v1h-1zM797,333h1v1h-1zM102,332h1v1h-1zM797,332h1v1h-1zM102,331h1v1h-1zM797,331h1v1h-1zM102,330h1v1h-1zM796,330h1v1h-1zM103,329h1v1h-1zM796,329h1v1h-1zM103,328h1v1h-1zM796,328h1v1h-1zM103,327h1v1h-1zM795,327h1v1h-1zM104,326h1v1h-1zM795,326h1v1h-1zM104,325h1v1h-1zM795,325h1v1h-1zM105,324h1v1h-1zM794,324h1v1h-1zM105,323h1v1h-1zM794,323h1v1h-1zM105,322h1v1h-1zM793,322h1v1h-1zM106,321h1v1h-1zM793,321h1v1h-1zM106,320h1v1h-1zM793,320h1v1h-1zM106,319h1v1h-1zM792,319h1v1h-1zM107,318h1v1h-1zM792,318h1v1h-1zM107,317h1v1h-1zM791,317h1v1h-1zM108,316h1v1h-1zM791,316h1v1h-1zM108,315h1v1h-1zM791,315h1v1h-1zM109,314h1v1h-1zM790,314h1v1h-1zM109,313h1v1h-1zM790,313h1v1h-1zM109,312h1v1h-1zM789,312h1v1h-1zM110,311h1v1h-1zM789,311h1v1h-1zM110,310h1v1h-1zM788,310h1v1h-1zM111,309h1v1h-1zM788,309h1v1h-1zM111,308h1v1h-1zM788,308h1v1h-1zM111,307h1v1h-1zM787,307h1v1h-1zM112,306h1v1h-1zM787,306h1v1h-1zM112,305h1v1h-1zM786,305h1v1h-1zM113,304h1v1h-1zM786,304h1v1h-1zM113,303h1v1h-1zM785,303h1v1h-1zM114,302h1v1h-1zM785,302h1v1h-1zM114,301h1v1h-1zM784,301h1v1h-1zM115,300h1v1h-1zM784,300h1v1h-1zM115,299h1v1h-1zM784,299h1v1h-1zM116,298h1v1h-1zM783,298h1v1h-1zM116,297h1v1h-1zM783,297h1v1h-1zM117,296h1v1h-1zM782,296h1v1h-1zM117,295h1v1h-1zM782,295h1v1h-1zM117,294h1v1h-1zM781,294h1v1h-1zM118,293h1v1h-1zM781,293h1v1h-1zM118,292h1v1h-1zM780,292h1v1h-1zM119,291h1v1h-1zM780,291h1v1h-1zM119,290h1v1h-1zM779,290h1v1h-1zM120,289h1v1h-1zM779,289h1v1h-1zM120,288h1v1h-1zM778,288h1v1h-1zM121,287h1v1h-1zM778,287h1v1h-1zM121,286h1v1h-1zM777,286h1v1h-1zM122,285h1v1h-1zM777,285h1v1h-1zM122,284h1v1h-1zM776,284h1v1h-1zM123,283h1v1h-1zM776,283h1v1h-1zM123,282h1v1h-1zM775,282h1v1h-1zM124,281h1v1h-1zM775,281h1v1h-1zM125,280h1v1h-1zM774,280h1v1h-1zM125,279h1v1h-1zM773,279h1v1h-1zM126,278h1v1h-1zM773,278h1v1h-1zM126,277h1v1h-1zM772,277h1v1h-1zM127,276h1v1h-1zM772,276h1v1h-1zM127,275h1v1h-1zM771,275h1v1h-1zM128,274h1v1h-1zM771,274h1v1h-1zM128,273h1v1h-1zM770,273h1v1h-1zM129,272h1v1h-1zM770,272h1v1h-1zM129,271h1v1h-1zM769,271h1v1h-1zM130,270h1v1h-1zM768,270h1v1h-1zM131,269h1v1h-1zM768,269h1v1h-1zM131,268h1v1h-1zM767,268h1v1h-1zM132,267h1v1h-1zM767,267h1v1h-1zM132,266h1v1h-1zM766,266h1v1h-1zM133,265h1v1h-1zM766,265h1v1h-1zM134,264h1v1h-1zM765,264h1v1h-1zM134,263h1v1h-1zM764,263h1v1h-1zM135,262h1v1h-1zM764,262h1v1h-1zM135,261h1v1h-1zM763,261h1v1h-1zM136,260h1v1h-1zM763,260h1v1h-1zM137,259h1v1h-1zM762,259h1v1h-1zM137,258h1v1h-1zM761,258h1v1h-1zM138,257h1v1h-1zM761,257h1v1h-1zM138,256h1v1h-1zM760,256h1v1h-1zM139,255h1v1h-1zM759,255h1v1h-1zM140,254h1v1h-1zM759,254h1v1h-1zM140,253h1v1h-1zM758,253h1v1h-1zM141,252h1v1h-1zM758,252h1v1h-1zM142,251h1v1h-1zM757,251h1v1h-1zM142,250h1v1h-1zM756,250h1v1h-1zM143,249h1v1h-1zM756,249h1v1h-1zM143,248h1v1h-1zM755,248h1v1h-1zM144,247h1v1h-1zM754,247h1v1h-1zM145,246h1v1h-1zM754,246h1v1h-1zM146,245h1v1h-1zM753,245h1v1h-1zM146,244h1v1h-1zM752,244h1v1h-1zM147,243h1v1h-1zM752,243h1v1h-1zM148,242h1v1h-1zM751,242h1v1h-1zM148,241h1v1h-1zM750,241h1v1h-1zM149,240h1v1h-1zM749,240h1v1h-1zM150,239h1v1h-1zM749,239h1v1h-1zM150,238h1v1h-1zM748,238h1v1h-1zM151,237h1v1h-1zM747,237h1v1h-1zM152,236h1v1h-1zM747,236h1v1h-1zM152,235h1v1h-1zM746,235h1v1h-1zM153,234h1v1h-1zM745,234h1v1h-1zM154,233h1v1h-1zM744,233h1v1h-1zM155,232h1v1h-1zM744,232h1v1h-1zM155,231h1v1h-1zM743,231h1v1h-1zM156,230h1v1h-1zM742,230h1v1h-1zM157,229h1v1h-1zM741,229h1v1h-1zM158,228h1v1h-1zM741,228h1v1h-1zM158,227h1v1h-1zM740,227h1v1h-1zM159,226h1v1h-1zM739,226h1v1h-1zM160,225h1v1h-1zM738,225h1v1h-1zM161,224h1v1h-1zM738,224h1v1h-1zM161,223h1v1h-1zM737,223h1v1h-1zM162,222h1v1h-1zM736,222h1v1h-1zM163,221h1v1h-1zM735,221h1v1h-1zM164,220h1v1h-1zM734,220h1v1h-1zM165,219h1v1h-1zM734,219h1v1h-1zM165,218h1v1h-1zM733,218h1v1h-1zM166,217h1v1h-1zM732,217h1v1h-1zM167,216h1v1h-1zM731,216h1v1h-1zM168,215h1v1h-1zM730,215h1v1h-1zM169,214h1v1h-1zM730,214h1v1h-1zM170,213h1v1h-1zM729,213h1v1h-1zM170,212h1v1h-1zM728,212h1v1h-1zM171,211h1v1h-1zM727,211h1v1h-1zM172,210h1v1h-1zM726,210h1v1h-1zM173,209h1v1h-1zM725,209h1v1h-1zM174,208h1v1h-1zM724,208h1v1h-1zM175,207h1v1h-1zM724,207h1v1h-1zM175,206h1v1h-1zM723,206h1v1h-1zM176,205h1v1h-1zM722,205h1v1h-1zM177,204h1v1h-1zM721,204h1v1h-1zM178,203h1v1h-1zM720,203h1v1h-1zM179,202h1v1h-1zM719,202h1v1h-1zM180,201h1v1h-1zM718,201h1v1h-1zM181,200h1v1h-1zM717,200h1v1h-1zM182,199h1v1h-1zM716,199h1v1h-1zM183,198h1v1h-1zM716,198h1v1h-1zM184,197h1v1h-1zM715,197h1v1h-1zM185,196h1v1h-1zM714,196h1v1h-1zM186,195h1v1h-1zM713,195h1v1h-1zM187,194h1v1h-1zM712,194h1v1h-1zM188,193h1v1h-1zM711,193h1v1h-1zM189,192h1v1h-1zM710,192h1v1h-1zM190,191h1v1h-1zM709,191h1v1h-1zM191,190h1v1h-1zM708,190h1v1h-1zM192,189h1v1h-1zM707,189h1v1h-1zM193,188h1v1h-1zM706,188h1v1h-1zM194,187h1v1h-1zM705,187h1v1h-1zM195,186h1v1h-1zM704,186h1v1h-1zM196,185h1v1h-1zM703,185h1v1h-1zM197,184h1v1h-1zM702,184h1v1h-1zM198,183h1v1h-1zM701,183h1v1h-1zM199,182h1v1h-1zM700,182h1v1h-1zM200,181h1v1h-1zM699,181h1v1h-1zM201,180h1v1h-1zM698,180h1v1h-1zM202,179h1v1h-1zM697,179h1v1h-1zM203,178h2v1h-2zM696,178h1v1h-1zM205,177h1v1h-1zM695,177h1v1h-1zM206,176h1v1h-1zM694,176h1v1h-1zM207,175h1v1h-1zM693,175h1v1h-1zM208,174h1v1h-1zM692,174h1v1h-1zM209,173h1v1h-1zM691,173h1v1h-1zM210,172h1v1h-1zM690,172h1v1h-1zM211,171h1v1h-1zM689,171h1v1h-1zM212,170h1v1h-1zM687,170h2v1h-2zM213,169h2v1h-2zM686,169h1v1h-1zM215,168h1v1h-1zM685,168h1v1h-1zM216,167h1v1h-1zM684,167h1v1h-1zM217,166h1v1h-1zM683,166h1v1h-1zM218,165h1v1h-1zM682,165h1v1h-1zM219,164h2v1h-2zM680,164h2v1h-2zM221,163h1v1h-1zM679,163h1v1h-1zM222,162h1v1h-1zM678,162h1v1h-1zM223,161h1v1h-1zM677,161h1v1h-1zM224,160h1v1h-1zM676,160h1v1h-1zM225,159h2v1h-2zM674,159h2v1h-2zM227,158h1v1h-1zM673,158h1v1h-1zM228,157h1v1h-1zM672,157h1v1h-1zM229,156h1v1h-1zM670,156h2v1h-2zM230,155h2v1h-2zM669,155h1v1h-1zM232,154h1v1h-1zM668,154h1v1h-1zM233,153h1v1h-1zM666,153h2v1h-2zM234,152h2v1h-2zM665,152h1v1h-1zM236,151h1v1h-1zM664,151h1v1h-1zM237,150h1v1h-1zM662,150h2v1h-2zM238,149h2v1h-2zM661,149h1v1h-1zM240,148h1v1h-1zM660,148h1v1h-1zM241,147h2v1h-2zM658,147h2v1h-2zM243,146h1v1h-1zM657,146h1v1h-1zM244,145h1v1h-1zM655,145h2v1h-2zM245,144h2v1h-2zM654,144h1v1h-1zM247,143h1v1h-1zM653,143h1v1h-1zM248,142h2v1h-2zM651,142h2v1h-2zM250,141h1v1h-1zM650,141h1v1h-1zM251,140h2v1h-2zM648,140h2v1h-2zM253,139h1v1h-1zM647,139h1v1h-1zM254,138h2v1h-2zM645,138h2v1h-2zM256,137h1v1h-1zM643,137h2v1h-2zM257,136h2v1h-2zM642,136h1v1h-1zM259,135h2v1h-2zM640,135h2v1h-2zM261,134h1v1h-1zM639,134h1v1h-1zM262,133h2v1h-2zM637,133h2v1h-2zM264,132h1v1h-1zM635,132h2v1h-2zM265,131h2v1h-2zM634,131h1v1h-1zM267,130h2v1h-2zM632,130h2v1h-2zM269,129h1v1h-1zM630,129h2v1h-2zM270,128h2v1h-2zM629,128h1v1h-1zM272,127h2v1h-2zM627,127h2v1h-2zM274,126h2v1h-2zM625,126h2v1h-2zM276,125h1v1h-1zM623,125h2v1h-2zM277,124h2v1h-2zM622,124h1v1h-1zM279,123h2v1h-2zM620,123h2v1h-2zM281,122h2v1h-2zM618,122h2v1h-2zM283,121h2v1h-2zM616,121h2v1h-2zM285,120h2v1h-2zM614,120h2v1h-2zM287,119h2v1h-2zM612,119h2v1h-2zM289,118h2v1h-2zM610,118h2v1h-2zM291,117h2v1h-2zM608,117h2v1h-2zM293,116h2v1h-2zM606,116h2v1h-2zM295,115h2v1h-2zM604,115h2v1h-2zM297,114h2v1h-2zM602,114h2v1h-2zM299,113h2v1h-2zM600,113h2v1h-2zM301,112h2v1h-2zM598,112h2v1h-2zM303,111h2v1h-2zM596,111h2v1h-2zM305,110h3v1h-3zM593,110h3v1h-3zM308,109h2v1h-2zM591,109h2v1h-2zM310,108h2v1h-2zM589,108h2v1h-2zM312,107h3v1h-3zM586,107h3v1h-3zM315,106h2v1h-2zM584,106h2v1h-2zM317,105h2v1h-2zM581,105h3v1h-3zM319,104h3v1h-3zM579,104h2v1h-2zM322,103h3v1h-3zM576,103h3v1h-3zM325,102h2v1h-2zM574,102h2v1h-2zM327,101h3v1h-3zM571,101h3v1h-3zM330,100h3v1h-3zM568,100h3v1h-3zM333,99h3v1h-3zM565,99h3v1h-3zM336,98h3v1h-3zM562,98h3v1h-3zM339,97h3v1h-3zM559,97h3v1h-3zM342,96h3v1h-3zM556,96h3v1h-3zM345,95h3v1h-3zM553,95h3v1h-3zM348,94h3v1h-3zM550,94h3v1h-3zM351,93h4v1h-4zM546,93h4v1h-4zM355,92h3v1h-3zM542,92h4v1h-4zM358,91h4v1h-4zM539,91h3v1h-3zM362,90h4v1h-4zM535,90h4v1h-4zM366,89h4v1h-4zM531,89h4v1h-4zM370,88h5v1h-5zM526,88h5v1h-5zM375,87h4v1h-4zM522,87h4v1h-4zM379,86h5v1h-5zM517,86h5v1h-5zM384,85h6v1h-6zM511,85h6v1h-6zM390,84h6v1h-6zM505,84h6v1h-6zM396,83h6v1h-6zM498,83h7v1h-7zM402,82h8v1h-8zM490,82h8v1h-8zM410,81h10v1h-10zM481,81h9v1h-9zM420,80h16v1h-16zM465,80h16v1h-16zM436,79h29v1h-29zM79,462h1v1h-1zM820,462h1v1h-1zM79,463h1v1h-1zM820,463h1v1h-1zM79,464h1v1h-1zM820,464h1v1h-1zM79,465h1v1h-1zM820,465h1v1h-1zM79,466h1v1h-1zM820,466h1v1h-1zM79,467h1v1h-1zM820,467h1v1h-1zM79,468h1v1h-1zM820,468h1v1h-1zM79,469h1v1h-1zM820,469h1v1h-1zM79,470h1v1h-1zM820,470h1v1h-1zM79,471h1v1h-1zM820,471h1v1h-1zM79,472h1v1h-1zM820,472h1v1h-1zM79,473h1v1h-1zM820,473h1v1h-1zM79,474h1v1h-1zM820,474h1v1h-1zM80,475h1v1h-1zM820,475h1v1h-1zM80,476h1v1h-1zM819,476h1v1h-1zM80,477h1v1h-1zM819,477h1v1h-1zM80,478h1v1h-1zM819,478h1v1h-1zM80,479h1v1h-1zM819,479h1v1h-1zM80,480h1v1h-1zM819,480h1v1h-1zM80,481h1v1h-1zM819,481h1v1h-1zM80,482h1v1h-1zM819,482h1v1h-1zM80,483h1v1h-1zM819,483h1v1h-1zM80,484h1v1h-1zM819,484h1v1h-1zM80,485h1v1h-1zM819,485h1v1h-1zM80,486h1v1h-1zM819,486h1v1h-1zM80,487h1v1h-1zM819,487h1v1h-1zM80,488h1v1h-1zM819,488h1v1h-1zM80,489h1v1h-1zM819,489h1v1h-1zM80,490h1v1h-1zM819,490h1v1h-1zM81,491h1v1h-1zM819,491h1v1h-1zM81,492h1v1h-1zM818,492h1v1h-1zM81,493h1v1h-1zM818,493h1v1h-1zM81,494h1v1h-1zM818,494h1v1h-1zM81,495h1v1h-1zM818,495h1v1h-1zM81,496h1v1h-1zM818,496h1v1h-1zM81,497h1v1h-1zM818,497h1v1h-1zM81,498h1v1h-1zM818,498h1v1h-1zM81,499h1v1h-1zM818,499h1v1h-1zM81,500h1v1h-1zM818,500h1v1h-1zM81,501h1v1h-1zM818,501h1v1h-1zM82,502h1v1h-1zM817,502h1v1h-1zM82,503h1v1h-1zM817,503h1v1h-1zM82,504h1v1h-1zM817,504h1v1h-1zM82,505h1v1h-1zM817,505h1v1h-1zM82,506h1v1h-1zM817,506h1v1h-1zM82,507h1v1h-1zM817,507h1v1h-1zM82,508h1v1h-1zM817,508h1v1h-1zM82,509h1v1h-1zM817,509h1v1h-1zM83,510h1v1h-1zM817,510h1v1h-1zM83,511h1v1h-1zM816,511h1v1h-1zM83,512h1v1h-1zM816,512h1v1h-1zM83,513h1v1h-1zM816,513h1v1h-1zM83,514h1v1h-1zM816,514h1v1h-1zM83,515h1v1h-1zM816,515h1v1h-1zM83,516h1v1h-1zM816,516h1v1h-1zM84,517h1v1h-1zM815,517h1v1h-1zM84,518h1v1h-1zM815,518h1v1h-1zM84,519h1v1h-1zM815,519h1v1h-1zM84,520h1v1h-1zM815,520h1v1h-1zM84,521h1v1h-1zM815,521h1v1h-1zM84,522h1v1h-1zM815,522h1v1h-1zM85,523h1v1h-1zM815,523h1v1h-1zM85,524h1v1h-1zM814,524h1v1h-1zM85,525h1v1h-1zM814,525h1v1h-1zM85,526h1v1h-1zM814,526h1v1h-1zM85,527h1v1h-1zM814,527h1v1h-1zM86,528h1v1h-1zM814,528h1v1h-1zM86,529h1v1h-1zM813,529h1v1h-1zM86,530h1v1h-1zM813,530h1v1h-1zM86,531h1v1h-1zM813,531h1v1h-1zM86,532h1v1h-1zM813,532h1v1h-1zM87,533h1v1h-1zM813,533h1v1h-1zM87,534h1v1h-1zM812,534h1v1h-1zM87,535h1v1h-1zM812,535h1v1h-1zM87,536h1v1h-1zM812,536h1v1h-1zM87,537h1v1h-1zM812,537h1v1h-1zM88,538h1v1h-1zM812,538h1v1h-1zM88,539h1v1h-1zM811,539h1v1h-1zM88,540h1v1h-1zM811,540h1v1h-1zM88,541h1v1h-1zM811,541h1v1h-1zM89,542h1v1h-1zM811,542h1v1h-1zM89,543h1v1h-1zM810,543h1v1h-1zM89,544h1v1h-1zM810,544h1v1h-1zM89,545h1v1h-1zM810,545h1v1h-1zM89,546h1v1h-1zM810,546h1v1h-1zM90,547h1v1h-1zM810,547h1v1h-1zM90,548h1v1h-1zM809,548h1v1h-1zM90,549h1v1h-1zM809,549h1v1h-1zM90,550h1v1h-1zM809,550h1v1h-1zM91,551h1v1h-1zM809,551h1v1h-1zM91,552h1v1h-1zM808,552h1v1h-1zM91,553h1v1h-1zM808,553h1v1h-1zM92,554h1v1h-1zM808,554h1v1h-1zM92,555h1v1h-1zM807,555h1v1h-1zM92,556h1v1h-1zM807,556h1v1h-1zM92,557h1v1h-1zM807,557h1v1h-1zM93,558h1v1h-1zM807,558h1v1h-1zM93,559h1v1h-1zM806,559h1v1h-1zM93,560h1v1h-1zM806,560h1v1h-1zM93,561h1v1h-1zM806,561h1v1h-1zM94,562h1v1h-1zM806,562h1v1h-1zM94,563h1v1h-1zM805,563h1v1h-1zM94,564h1v1h-1zM805,564h1v1h-1zM95,565h1v1h-1zM805,565h1v1h-1zM95,566h1v1h-1zM804,566h1v1h-1zM95,567h1v1h-1zM804,567h1v1h-1zM96,568h1v1h-1zM804,568h1v1h-1zM96,569h1v1h-1zM803,569h1v1h-1zM96,570h1v1h-1zM803,570h1v1h-1zM97,571h1v1h-1zM803,571h1v1h-1zM97,572h1v1h-1zM802,572h1v1h-1zM97,573h1v1h-1zM802,573h1v1h-1zM98,574h1v1h-1zM802,574h1v1h-1zM98,575h1v1h-1zM801,575h1v1h-1zM98,576h1v1h-1zM801,576h1v1h-1zM99,577h1v1h-1zM801,577h1v1h-1zM99,578h1v1h-1zM800,578h1v1h-1zM99,579h1v1h-1zM800,579h1v1h-1zM100,580h1v1h-1zM800,580h1v1h-1zM100,581h1v1h-1zM799,581h1v1h-1zM100,582h1v1h-1zM799,582h1v1h-1zM101,583h1v1h-1zM799,583h1v1h-1zM101,584h1v1h-1zM798,584h1v1h-1zM101,585h1v1h-1zM798,585h1v1h-1zM102,586h1v1h-1zM798,586h1v1h-1zM102,587h1v1h-1zM797,587h1v1h-1zM102,588h1v1h-1zM797,588h1v1h-1zM103,589h1v1h-1zM796,589h1v1h-1zM103,590h1v1h-1zM796,590h1v1h-1zM104,591h1v1h-1zM796,591h1v1h-1zM104,592h1v1h-1zM795,592h1v1h-1zM104,593h1v1h-1zM795,593h1v1h-1zM105,594h1v1h-1zM795,594h1v1h-1zM105,595h1v1h-1zM794,595h1v1h-1zM106,596h1v1h-1zM794,596h1v1h-1zM106,597h1v1h-1zM793,597h1v1h-1zM107,598h1v1h-1zM793,598h1v1h-1zM107,599h1v1h-1zM792,599h1v1h-1zM107,600h1v1h-1zM792,600h1v1h-1zM108,601h1v1h-1zM792,601h1v1h-1zM108,602h1v1h-1zM791,602h1v1h-1zM109,603h1v1h-1zM791,603h1v1h-1zM109,604h1v1h-1zM790,604h1v1h-1zM109,605h1v1h-1zM790,605h1v1h-1zM110,606h1v1h-1zM789,606h1v1h-1zM110,607h1v1h-1zM789,607h1v1h-1zM111,608h1v1h-1zM789,608h1v1h-1zM111,609h1v1h-1zM788,609h1v1h-1zM112,610h1v1h-1zM788,610h1v1h-1zM112,611h1v1h-1zM787,611h1v1h-1zM113,612h1v1h-1zM787,612h1v1h-1zM113,613h1v1h-1zM786,613h1v1h-1zM114,614h1v1h-1zM786,614h1v1h-1zM114,615h1v1h-1zM785,615h1v1h-1zM115,616h1v1h-1zM785,616h1v1h-1zM115,617h1v1h-1zM784,617h1v1h-1zM116,618h1v1h-1zM784,618h1v1h-1zM116,619h1v1h-1zM783,619h1v1h-1zM117,620h1v1h-1zM783,620h1v1h-1zM117,621h1v1h-1zM782,621h1v1h-1zM118,622h1v1h-1zM782,622h1v1h-1zM118,623h1v1h-1zM781,623h1v1h-1zM119,624h1v1h-1zM781,624h1v1h-1zM119,625h1v1h-1zM780,625h1v1h-1zM120,626h1v1h-1zM780,626h1v1h-1zM120,627h1v1h-1zM779,627h1v1h-1zM121,628h1v1h-1zM779,628h1v1h-1zM121,629h1v1h-1zM778,629h1v1h-1zM122,630h1v1h-1zM778,630h1v1h-1zM122,631h1v1h-1zM777,631h1v1h-1zM123,632h1v1h-1zM777,632h1v1h-1zM123,633h1v1h-1zM776,633h1v1h-1zM124,634h1v1h-1zM776,634h1v1h-1zM125,635h1v1h-1zM775,635h1v1h-1zM125,636h1v1h-1zM774,636h1v1h-1zM126,637h1v1h-1zM774,637h1v1h-1zM126,638h1v1h-1zM773,638h1v1h-1zM127,639h1v1h-1zM773,639h1v1h-1zM127,640h1v1h-1zM772,640h1v1h-1zM128,641h1v1h-1zM772,641h1v1h-1zM129,642h1v1h-1zM771,642h1v1h-1zM129,643h1v1h-1zM770,643h1v1h-1zM130,644h1v1h-1zM770,644h1v1h-1zM130,645h1v1h-1zM769,645h1v1h-1zM131,646h1v1h-1zM769,646h1v1h-1zM132,647h1v1h-1zM768,647h1v1h-1zM132,648h1v1h-1zM767,648h1v1h-1zM133,649h1v1h-1zM767,649h1v1h-1zM133,650h1v1h-1zM766,650h1v1h-1zM134,651h1v1h-1zM765,651h1v1h-1zM135,652h1v1h-1zM765,652h1v1h-1zM135,653h1v1h-1zM764,653h1v1h-1zM136,654h1v1h-1zM764,654h1v1h-1zM137,655h1v1h-1zM763,655h1v1h-1zM137,656h1v1h-1zM762,656h1v1h-1zM138,657h1v1h-1zM762,657h1v1h-1zM139,658h1v1h-1zM761,658h1v1h-1zM139,659h1v1h-1zM760,659h1v1h-1zM140,660h1v1h-1zM760,660h1v1h-1zM141,661h1v1h-1zM759,661h1v1h-1zM141,662h1v1h-1zM758,662h1v1h-1zM142,663h1v1h-1zM758,663h1v1h-1zM143,664h1v1h-1zM757,664h1v1h-1zM143,665h1v1h-1zM756,665h1v1h-1zM144,666h1v1h-1zM756,666h1v1h-1zM145,667h1v1h-1zM755,667h1v1h-1zM146,668h1v1h-1zM754,668h1v1h-1zM146,669h1v1h-1zM753,669h1v1h-1zM147,670h1v1h-1zM753,670h1v1h-1zM148,671h1v1h-1zM752,671h1v1h-1zM148,672h1v1h-1zM751,672h1v1h-1zM149,673h1v1h-1zM750,673h1v1h-1zM150,674h1v1h-1zM750,674h1v1h-1zM151,675h1v1h-1zM749,675h1v1h-1zM152,676h1v1h-1zM748,676h1v1h-1zM152,677h1v1h-1zM747,677h1v1h-1zM153,678h1v1h-1zM747,678h1v1h-1zM154,679h1v1h-1zM746,679h1v1h-1zM155,680h1v1h-1zM745,680h1v1h-1zM155,681h1v1h-1zM744,681h1v1h-1zM156,682h1v1h-1zM744,682h1v1h-1zM157,683h1v1h-1zM743,683h1v1h-1zM158,684h1v1h-1zM742,684h1v1h-1zM159,685h1v1h-1zM741,685h1v1h-1zM159,686h1v1h-1zM740,686h1v1h-1zM160,687h1v1h-1zM740,687h1v1h-1zM161,688h1v1h-1zM739,688h1v1h-1zM162,689h1v1h-1zM738,689h1v1h-1zM163,690h1v1h-1zM737,690h1v1h-1zM164,691h1v1h-1zM736,691h1v1h-1zM165,692h1v1h-1zM735,692h1v1h-1zM165,693h1v1h-1zM734,693h1v1h-1zM166,694h1v1h-1zM734,694h1v1h-1zM167,695h1v1h-1zM733,695h1v1h-1zM168,696h1v1h-1zM732,696h1v1h-1zM169,697h1v1h-1zM731,697h1v1h-1zM170,698h1v1h-1zM730,698h1v1h-1zM171,699h1v1h-1zM729,699h1v1h-1zM172,700h1v1h-1zM728,700h1v1h-1zM173,701h1v1h-1zM727,701h1v1h-1zM174,702h1v1h-1zM726,702h1v1h-1zM174,703h1v1h-1zM725,703h1v1h-1zM175,704h1v1h-1zM724,704h1v1h-1zM176,705h1v1h-1zM723,705h1v1h-1zM177,706h1v1h-1zM722,706h1v1h-1zM178,707h1v1h-1zM721,707h1v1h-1zM179,708h1v1h-1zM720,708h1v1h-1zM180,709h1v1h-1zM719,709h1v1h-1zM181,710h1v1h-1zM718,710h1v1h-1zM182,711h1v1h-1zM717,711h1v1h-1zM183,712h1v1h-1zM716,712h1v1h-1zM184,713h1v1h-1zM715,713h1v1h-1zM185,714h1v1h-1zM714,714h1v1h-1zM186,715h1v1h-1zM713,715h1v1h-1zM187,716h1v1h-1zM712,716h1v1h-1zM188,717h1v1h-1zM711,717h1v1h-1zM189,718h1v1h-1zM710,718h1v1h-1zM190,719h1v1h-1zM709,719h1v1h-1zM191,720h1v1h-1zM708,720h1v1h-1zM192,721h1v1h-1zM706,721h2v1h-2zM193,722h1v1h-1zM705,722h1v1h-1zM194,723h1v1h-1zM704,723h1v1h-1zM195,724h1v1h-1zM703,724h1v1h-1zM196,725h1v1h-1zM702,725h1v1h-1zM197,726h1v1h-1zM701,726h1v1h-1zM198,727h1v1h-1zM700,727h1v1h-1zM199,728h1v1h-1zM699,728h1v1h-1zM200,729h2v1h-2zM697,729h2v1h-2zM202,730h1v1h-1zM696,730h1v1h-1zM203,731h1v1h-1zM695,731h1v1h-1zM204,732h1v1h-1zM694,732h1v1h-1zM205,733h1v1h-1zM693,733h1v1h-1zM206,734h2v1h-2zM691,734h2v1h-2zM208,735h1v1h-1zM690,735h1v1h-1zM209,736h1v1h-1zM689,736h1v1h-1zM210,737h1v1h-1zM688,737h1v1h-1zM211,738h1v1h-1zM687,738h1v1h-1zM212,739h2v1h-2zM685,739h2v1h-2zM214,740h1v1h-1zM684,740h1v1h-1zM215,741h1v1h-1zM683,741h1v1h-1zM216,742h2v1h-2zM681,742h2v1h-2zM218,743h1v1h-1zM680,743h1v1h-1zM219,744h1v1h-1zM679,744h1v1h-1zM220,745h2v1h-2zM677,745h2v1h-2zM222,746h1v1h-1zM676,746h1v1h-1zM223,747h1v1h-1zM675,747h1v1h-1zM224,748h2v1h-2zM673,748h2v1h-2zM226,749h1v1h-1zM672,749h1v1h-1zM227,750h1v1h-1zM671,750h1v1h-1zM228,751h2v1h-2zM669,751h2v1h-2zM230,752h1v1h-1zM668,752h1v1h-1zM231,753h2v1h-2zM666,753h2v1h-2zM233,754h1v1h-1zM665,754h1v1h-1zM234,755h2v1h-2zM663,755h2v1h-2zM236,756h1v1h-1zM662,756h1v1h-1zM237,757h2v1h-2zM660,757h2v1h-2zM239,758h1v1h-1zM659,758h1v1h-1zM240,759h2v1h-2zM657,759h2v1h-2zM242,760h1v1h-1zM656,760h1v1h-1zM243,761h2v1h-2zM654,761h2v1h-2zM245,762h2v1h-2zM653,762h1v1h-1zM247,763h1v1h-1zM651,763h2v1h-2zM248,764h2v1h-2zM649,764h2v1h-2zM250,765h1v1h-1zM648,765h1v1h-1zM251,766h2v1h-2zM646,766h2v1h-2zM253,767h2v1h-2zM644,767h2v1h-2zM255,768h2v1h-2zM643,768h1v1h-1zM257,769h1v1h-1zM641,769h2v1h-2zM258,770h2v1h-2zM639,770h2v1h-2zM260,771h2v1h-2zM637,771h2v1h-2zM262,772h2v1h-2zM635,772h2v1h-2zM264,773h1v1h-1zM634,773h1v1h-1zM265,774h2v1h-2zM632,774h2v1h-2zM267,775h2v1h-2zM630,775h2v1h-2zM269,776h2v1h-2zM628,776h2v1h-2zM271,777h2v1h-2zM626,777h2v1h-2zM273,778h2v1h-2zM624,778h2v1h-2zM275,779h2v1h-2zM622,779h2v1h-2zM277,780h2v1h-2zM620,780h2v1h-2zM279,781h2v1h-2zM618,781h2v1h-2zM281,782h2v1h-2zM616,782h2v1h-2zM283,783h2v1h-2zM614,783h2v1h-2zM285,784h2v1h-2zM612,784h2v1h-2zM287,785h3v1h-3zM610,785h2v1h-2zM290,786h2v1h-2zM607,786h3v1h-3zM292,787h2v1h-2zM605,787h2v1h-2zM294,788h2v1h-2zM603,788h2v1h-2zM296,789h3v1h-3zM600,789h3v1h-3zM299,790h2v1h-2zM598,790h2v1h-2zM301,791h3v1h-3zM596,791h2v1h-2zM304,792h2v1h-2zM593,792h3v1h-3zM306,793h3v1h-3zM591,793h2v1h-2zM309,794h2v1h-2zM588,794h3v1h-3zM311,795h3v1h-3zM585,795h3v1h-3zM314,796h3v1h-3zM583,796h2v1h-2zM317,797h2v1h-2zM580,797h3v1h-3zM319,798h3v1h-3zM577,798h3v1h-3zM322,799h3v1h-3zM574,799h3v1h-3zM325,800h3v1h-3zM571,800h3v1h-3zM328,801h3v1h-3zM568,801h3v1h-3zM331,802h3v1h-3zM565,802h3v1h-3zM334,803h4v1h-4zM561,803h4v1h-4zM338,804h3v1h-3zM558,804h3v1h-3zM341,805h4v1h-4zM554,805h4v1h-4zM345,806h3v1h-3zM551,806h3v1h-3zM348,807h4v1h-4zM547,807h4v1h-4zM352,808h4v1h-4zM543,808h4v1h-4zM356,809h4v1h-4zM539,809h4v1h-4zM360,810h5v1h-5zM534,810h5v1h-5zM365,811h4v1h-4zM530,811h4v1h-4zM369,812h5v1h-5zM525,812h5v1h-5zM374,813h5v1h-5zM520,813h5v1h-5zM379,814h6v1h-6zM514,814h6v1h-6zM385,815h7v1h-7zM508,815h6v1h-6zM392,816h7v1h-7zM500,816h8v1h-8zM399,817h8v1h-8zM492,817h8v1h-8zM407,818h11v1h-11zM482,818h10v1h-10zM418,819h16v1h-16zM465,819h17v1h-17zM434,820h31v1h-31zM265,452h1v1h-1zM635,452h1v1h-1zM265,451h1v1h-1zM634,451h1v1h-1zM265,450h1v1h-1zM634,450h1v1h-1zM265,449h1v1h-1zM634,449h1v1h-1zM265,448h1v1h-1zM634,448h1v1h-1zM265,447h1v1h-1zM634,447h1v1h-1zM265,446h1v1h-1zM634,446h1v1h-1zM265,445h1v1h-1zM634,445h1v1h-1zM265,444h1v1h-1zM634,444h1v1h-1zM265,443h1v1h-1zM634,443h1v1h-1zM265,442h1v1h-1zM634,442h1v1h-1zM265,441h1v1h-1zM634,441h1v1h-1zM265,440h1v1h-1zM634,440h1v1h-1zM265,439h1v1h-1zM634,439h1v1h-1zM265,438h1v1h-1zM634,438h1v1h-1zM265,437h1v1h-1zM634,437h1v1h-1zM265,436h1v1h-1zM634,436h1v1h-1zM265,435h1v1h-1zM634,435h1v1h-1zM265,434h1v1h-1zM634,434h1v1h-1zM265,433h1v1h-1zM633,433h1v1h-1zM266,432h1v1h-1zM633,432h1v1h-1zM266,431h1v1h-1zM633,431h1v1h-1zM266,430h1v1h-1zM633,430h1v1h-1zM266,429h1v1h-1zM633,429h1v1h-1zM266,428h1v1h-1zM633,428h1v1h-1zM266,427h1v1h-1zM633,427h1v1h-1zM266,426h1v1h-1zM633,426h1v1h-1zM266,425h1v1h-1zM632,425h1v1h-1zM267,424h1v1h-1zM632,424h1v1h-1zM267,423h1v1h-1zM632,423h1v1h-1zM267,422h1v1h-1zM632,422h1v1h-1zM267,421h1v1h-1zM632,421h1v1h-1zM267,420h1v1h-1zM632,420h1v1h-1zM267,419h1v1h-1zM631,419h1v1h-1zM268,418h1v1h-1zM631,418h1v1h-1zM268,417h1v1h-1zM631,417h1v1h-1zM268,416h1v1h-1zM631,416h1v1h-1zM268,415h1v1h-1zM631,415h1v1h-1zM268,414h1v1h-1zM630,414h1v1h-1zM269,413h1v1h-1zM630,413h1v1h-1zM269,412h1v1h-1zM630,412h1v1h-1zM269,411h1v1h-1zM630,411h1v1h-1zM269,410h1v1h-1zM630,410h1v1h-1zM269,409h1v1h-1zM629,409h1v1h-1zM270,408h1v1h-1zM629,408h1v1h-1zM270,407h1v1h-1zM629,407h1v1h-1zM270,406h1v1h-1zM629,406h1v1h-1zM270,405h1v1h-1zM628,405h1v1h-1zM271,404h1v1h-1zM628,404h1v1h-1zM271,403h1v1h-1zM628,403h1v1h-1zM271,402h1v1h-1zM627,402h1v1h-1zM272,401h1v1h-1zM627,401h1v1h-1zM272,400h1v1h-1zM627,400h1v1h-1zM272,399h1v1h-1zM627,399h1v1h-1zM272,398h1v1h-1zM626,398h1v1h-1zM273,397h1v1h-1zM626,397h1v1h-1zM273,396h1v1h-1zM626,396h1v1h-1zM273,395h1v1h-1zM625,395h1v1h-1zM274,394h1v1h-1zM625,394h1v1h-1zM274,393h1v1h-1zM625,393h1v1h-1zM274,392h1v1h-1zM624,392h1v1h-1zM275,391h1v1h-1zM624,391h1v1h-1zM275,390h1v1h-1zM624,390h1v1h-1zM275,389h1v1h-1zM623,389h1v1h-1zM276,388h1v1h-1zM623,388h1v1h-1zM276,387h1v1h-1zM623,387h1v1h-1zM276,386h1v1h-1zM622,386h1v1h-1zM277,385h1v1h-1zM622,385h1v1h-1zM277,384h1v1h-1zM621,384h1v1h-1zM278,383h1v1h-1zM621,383h1v1h-1zM278,382h1v1h-1zM621,382h1v1h-1zM278,381h1v1h-1zM620,381h1v1h-1zM279,380h1v1h-1zM620,380h1v1h-1zM279,379h1v1h-1zM619,379h1v1h-1zM280,378h1v1h-1zM619,378h1v1h-1zM280,377h1v1h-1zM618,377h1v1h-1zM281,376h1v1h-1zM618,376h1v1h-1zM281,375h1v1h-1zM618,375h1v1h-1zM281,374h1v1h-1zM617,374h1v1h-1zM282,373h1v1h-1zM617,373h1v1h-1zM282,372h1v1h-1zM616,372h1v1h-1zM283,371h1v1h-1zM616,371h1v1h-1zM283,370h1v1h-1zM615,370h1v1h-1zM284,369h1v1h-1zM615,369h1v1h-1zM284,368h1v1h-1zM614,368h1v1h-1zM285,367h1v1h-1zM614,367h1v1h-1zM285,366h1v1h-1zM613,366h1v1h-1zM286,365h1v1h-1zM613,365h1v1h-1zM286,364h1v1h-1zM612,364h1v1h-1zM287,363h1v1h-1zM612,363h1v1h-1zM287,362h1v1h-1zM611,362h1v1h-1zM288,361h1v1h-1zM611,361h1v1h-1zM288,360h1v1h-1zM610,360h1v1h-1zM289,359h1v1h-1zM609,359h1v1h-1zM290,358h1v1h-1zM609,358h1v1h-1zM290,357h1v1h-1zM608,357h1v1h-1zM291,356h1v1h-1zM608,356h1v1h-1zM291,355h1v1h-1zM607,355h1v1h-1zM292,354h1v1h-1zM606,354h1v1h-1zM293,353h1v1h-1zM606,353h1v1h-1zM293,352h1v1h-1zM605,352h1v1h-1zM294,351h1v1h-1zM605,351h1v1h-1zM294,350h1v1h-1zM604,350h1v1h-1zM295,349h1v1h-1zM603,349h1v1h-1zM296,348h1v1h-1zM603,348h1v1h-1zM296,347h1v1h-1zM602,347h1v1h-1zM297,346h1v1h-1zM601,346h1v1h-1zM298,345h1v1h-1zM601,345h1v1h-1zM298,344h1v1h-1zM600,344h1v1h-1zM299,343h1v1h-1zM599,343h1v1h-1zM300,342h1v1h-1zM598,342h1v1h-1zM301,341h1v1h-1zM598,341h1v1h-1zM301,340h1v1h-1zM597,340h1v1h-1zM302,339h1v1h-1zM596,339h1v1h-1zM303,338h1v1h-1zM595,338h1v1h-1zM304,337h1v1h-1zM595,337h1v1h-1zM304,336h1v1h-1zM594,336h1v1h-1zM305,335h1v1h-1zM593,335h1v1h-1zM306,334h1v1h-1zM592,334h1v1h-1zM307,333h1v1h-1zM591,333h1v1h-1zM308,332h1v1h-1zM591,332h1v1h-1zM308,331h1v1h-1zM590,331h1v1h-1zM309,330h1v1h-1zM589,330h1v1h-1zM310,329h1v1h-1zM588,329h1v1h-1zM311,328h1v1h-1zM587,328h1v1h-1zM312,327h1v1h-1zM586,327h1v1h-1zM313,326h1v1h-1zM585,326h1v1h-1zM314,325h1v1h-1zM585,325h1v1h-1zM315,324h1v1h-1zM584,324h1v1h-1zM316,323h1v1h-1zM583,323h1v1h-1zM317,322h1v1h-1zM582,322h1v1h-1zM318,321h1v1h-1zM581,321h1v1h-1zM319,320h1v1h-1zM580,320h1v1h-1zM320,319h1v1h-1zM579,319h1v1h-1zM321,318h1v1h-1zM578,318h1v1h-1zM322,317h1v1h-1zM577,317h1v1h-1zM323,316h1v1h-1zM576,316h1v1h-1zM324,315h1v1h-1zM575,315h1v1h-1zM325,314h1v1h-1zM574,314h1v1h-1zM326,313h2v1h-2zM573,313h1v1h-1zM328,312h1v1h-1zM572,312h1v1h-1zM329,311h1v1h-1zM571,311h1v1h-1zM330,310h1v1h-1zM570,310h1v1h-1zM331,309h1v1h-1zM569,309h1v1h-1zM332,308h1v1h-1zM568,308h1v1h-1zM333,307h1v1h-1zM567,307h1v1h-1zM334,306h2v1h-2zM565,306h2v1h-2zM336,305h1v1h-1zM564,305h1v1h-1zM337,304h1v1h-1zM563,304h1v1h-1zM338,303h1v1h-1zM561,303h2v1h-2zM339,302h2v1h-2zM560,302h1v1h-1zM341,301h1v1h-1zM559,301h1v1h-1zM342,300h1v1h-1zM557,300h2v1h-2zM343,299h2v1h-2zM556,299h1v1h-1zM345,298h1v1h-1zM555,298h1v1h-1zM346,297h2v1h-2zM553,297h2v1h-2zM348,296h1v1h-1zM552,296h1v1h-1zM349,295h2v1h-2zM550,295h2v1h-2zM351,294h1v1h-1zM549,294h1v1h-1zM352,293h2v1h-2zM547,293h2v1h-2zM354,292h1v1h-1zM546,292h1v1h-1zM355,291h2v1h-2zM544,291h2v1h-2zM357,290h2v1h-2zM542,290h2v1h-2zM359,289h2v1h-2zM540,289h2v1h-2zM361,288h1v1h-1zM539,288h1v1h-1zM362,287h2v1h-2zM537,287h2v1h-2zM364,286h2v1h-2zM535,286h2v1h-2zM366,285h2v1h-2zM533,285h2v1h-2zM368,284h2v1h-2zM531,284h2v1h-2zM370,283h2v1h-2zM529,283h2v1h-2zM372,282h2v1h-2zM527,282h2v1h-2zM374,281h2v1h-2zM525,281h2v1h-2zM376,280h2v1h-2zM522,280h3v1h-3zM378,279h3v1h-3zM520,279h2v1h-2zM381,278h2v1h-2zM518,278h2v1h-2zM383,277h3v1h-3zM515,277h3v1h-3zM386,276h2v1h-2zM512,276h3v1h-3zM388,275h3v1h-3zM510,275h2v1h-2zM391,274h3v1h-3zM507,274h3v1h-3zM394,273h3v1h-3zM504,273h3v1h-3zM397,272h4v1h-4zM500,272h4v1h-4zM401,271h3v1h-3zM497,271h3v1h-3zM404,270h4v1h-4zM493,270h4v1h-4zM408,269h5v1h-5zM488,269h5v1h-5zM413,268h5v1h-5zM483,268h5v1h-5zM418,267h6v1h-6zM477,267h6v1h-6zM424,266h8v1h-8zM469,266h8v1h-8zM432,265h37v1h-37zM265,453h1v1h-1zM634,453h1v1h-1zM265,454h1v1h-1zM634,454h1v1h-1zM265,455h1v1h-1zM634,455h1v1h-1zM265,456h1v1h-1zM634,456h1v1h-1zM265,457h1v1h-1zM634,457h1v1h-1zM265,458h1v1h-1zM634,458h1v1h-1zM265,459h1v1h-1zM634,459h1v1h-1zM265,460h1v1h-1zM634,460h1v1h-1zM265,461h1v1h-1zM634,461h1v1h-1zM265,462h1v1h-1zM634,462h1v1h-1zM265,463h1v1h-1zM634,463h1v1h-1zM265,464h1v1h-1zM634,464h1v1h-1zM265,465h1v1h-1zM634,465h1v1h-1zM265,466h1v1h-1zM634,466h1v1h-1zM265,467h1v1h-1zM634,467h1v1h-1zM265,468h1v1h-1zM634,468h1v1h-1zM265,469h1v1h-1zM634,469h1v1h-1zM265,470h1v1h-1zM634,470h1v1h-1zM266,471h1v1h-1zM634,471h1v1h-1zM266,472h1v1h-1zM633,472h1v1h-1zM266,473h1v1h-1zM633,473h1v1h-1zM266,474h1v1h-1zM633,474h1v1h-1zM266,475h1v1h-1zM633,475h1v1h-1zM266,476h1v1h-1zM633,476h1v1h-1zM266,477h1v1h-1zM633,477h1v1h-1zM266,478h1v1h-1zM633,478h1v1h-1zM267,479h1v1h-1zM633,479h1v1h-1zM267,480h1v1h-1zM632,480h1v1h-1zM267,481h1v1h-1zM632,481h1v1h-1zM267,482h1v1h-1zM632,482h1v1h-1zM267,483h1v1h-1zM632,483h1v1h-1zM267,484h1v1h-1zM632,484h1v1h-1zM268,485h1v1h-1zM632,485h1v1h-1zM268,486h1v1h-1zM631,486h1v1h-1zM268,487h1v1h-1zM631,487h1v1h-1zM268,488h1v1h-1zM631,488h1v1h-1zM268,489h1v1h-1zM631,489h1v1h-1zM269,490h1v1h-1zM631,490h1v1h-1zM269,491h1v1h-1zM630,491h1v1h-1zM269,492h1v1h-1zM630,492h1v1h-1zM269,493h1v1h-1zM630,493h1v1h-1zM269,494h1v1h-1zM630,494h1v1h-1zM270,495h1v1h-1zM630,495h1v1h-1zM270,496h1v1h-1zM629,496h1v1h-1zM270,497h1v1h-1zM629,497h1v1h-1zM270,498h1v1h-1zM629,498h1v1h-1zM271,499h1v1h-1zM629,499h1v1h-1zM271,500h1v1h-1zM628,500h1v1h-1zM271,501h1v1h-1zM628,501h1v1h-1zM272,502h1v1h-1zM628,502h1v1h-1zM272,503h1v1h-1zM627,503h1v1h-1zM272,504h1v1h-1zM627,504h1v1h-1zM272,505h1v1h-1zM627,505h1v1h-1zM273,506h1v1h-1zM627,506h1v1h-1zM273,507h1v1h-1zM626,507h1v1h-1zM273,508h1v1h-1zM626,508h1v1h-1zM274,509h1v1h-1zM626,509h1v1h-1zM274,510h1v1h-1zM625,510h1v1h-1zM274,511h1v1h-1zM625,511h1v1h-1zM275,512h1v1h-1zM625,512h1v1h-1zM275,513h1v1h-1zM624,513h1v1h-1zM275,514h1v1h-1zM624,514h1v1h-1zM276,515h1v1h-1zM624,515h1v1h-1zM276,516h1v1h-1zM623,516h1v1h-1zM277,517h1v1h-1zM623,517h1v1h-1zM277,518h1v1h-1zM622,518h1v1h-1zM277,519h1v1h-1zM622,519h1v1h-1zM278,520h1v1h-1zM622,520h1v1h-1zM278,521h1v1h-1zM621,521h1v1h-1zM279,522h1v1h-1zM621,522h1v1h-1zM279,523h1v1h-1zM620,523h1v1h-1zM279,524h1v1h-1zM620,524h1v1h-1zM280,525h1v1h-1zM620,525h1v1h-1zM280,526h1v1h-1zM619,526h1v1h-1zM281,527h1v1h-1zM619,527h1v1h-1zM281,528h1v1h-1zM618,528h1v1h-1zM282,529h1v1h-1zM618,529h1v1h-1zM282,530h1v1h-1zM617,530h1v1h-1zM283,531h1v1h-1zM617,531h1v1h-1zM283,532h1v1h-1zM616,532h1v1h-1zM284,533h1v1h-1zM616,533h1v1h-1zM284,534h1v1h-1zM615,534h1v1h-1zM285,535h1v1h-1zM615,535h1v1h-1zM285,536h1v1h-1zM614,536h1v1h-1zM286,537h1v1h-1zM614,537h1v1h-1zM286,538h1v1h-1zM613,538h1v1h-1zM287,539h1v1h-1zM613,539h1v1h-1zM287,540h1v1h-1zM612,540h1v1h-1zM288,541h1v1h-1zM612,541h1v1h-1zM288,542h1v1h-1zM611,542h1v1h-1zM289,543h1v1h-1zM611,543h1v1h-1zM290,544h1v1h-1zM610,544h1v1h-1zM290,545h1v1h-1zM609,545h1v1h-1zM291,546h1v1h-1zM609,546h1v1h-1zM291,547h1v1h-1zM608,547h1v1h-1zM292,548h1v1h-1zM608,548h1v1h-1zM293,549h1v1h-1zM607,549h1v1h-1zM293,550h1v1h-1zM606,550h1v1h-1zM294,551h1v1h-1zM606,551h1v1h-1zM295,552h1v1h-1zM605,552h1v1h-1zM295,553h1v1h-1zM604,553h1v1h-1zM296,554h1v1h-1zM604,554h1v1h-1zM297,555h1v1h-1zM603,555h1v1h-1zM297,556h1v1h-1zM602,556h1v1h-1zM298,557h1v1h-1zM602,557h1v1h-1zM299,558h1v1h-1zM601,558h1v1h-1zM299,559h1v1h-1zM600,559h1v1h-1zM300,560h1v1h-1zM600,560h1v1h-1zM301,561h1v1h-1zM599,561h1v1h-1zM302,562h1v1h-1zM598,562h1v1h-1zM302,563h1v1h-1zM597,563h1v1h-1zM303,564h1v1h-1zM597,564h1v1h-1zM304,565h1v1h-1zM596,565h1v1h-1zM305,566h1v1h-1zM595,566h1v1h-1zM306,567h1v1h-1zM594,567h1v1h-1zM306,568h1v1h-1zM593,568h1v1h-1zM307,569h1v1h-1zM592,569h1v1h-1zM308,570h1v1h-1zM592,570h1v1h-1zM309,571h1v1h-1zM591,571h1v1h-1zM310,572h1v1h-1zM590,572h1v1h-1zM311,573h1v1h-1zM589,573h1v1h-1zM312,574h1v1h-1zM588,574h1v1h-1zM313,575h1v1h-1zM587,575h1v1h-1zM314,576h1v1h-1zM586,576h1v1h-1zM315,577h1v1h-1zM585,577h1v1h-1zM315,578h1v1h-1zM584,578h1v1h-1zM316,579h1v1h-1zM583,579h1v1h-1zM317,580h1v1h-1zM582,580h1v1h-1zM318,581h1v1h-1zM581,581h1v1h-1zM319,582h1v1h-1zM579,582h2v1h-2zM320,583h1v1h-1zM578,583h1v1h-1zM321,584h1v1h-1zM577,584h1v1h-1zM322,585h1v1h-1zM576,585h1v1h-1zM323,586h1v1h-1zM575,586h1v1h-1zM324,587h1v1h-1zM574,587h1v1h-1zM325,588h1v1h-1zM573,588h1v1h-1zM326,589h1v1h-1zM572,589h1v1h-1zM327,590h1v1h-1zM571,590h1v1h-1zM328,591h2v1h-2zM569,591h2v1h-2zM330,592h1v1h-1zM568,592h1v1h-1zM331,593h1v1h-1zM567,593h1v1h-1zM332,594h1v1h-1zM566,594h1v1h-1zM333,595h2v1h-2zM564,595h2v1h-2zM335,596h1v1h-1zM563,596h1v1h-1zM336,597h1v1h-1zM562,597h1v1h-1zM337,598h2v1h-2zM561,598h1v1h-1zM339,599h1v1h-1zM559,599h2v1h-2zM340,600h1v1h-1zM558,600h1v1h-1zM341,601h2v1h-2zM556,601h2v1h-2zM343,602h1v1h-1zM555,602h1v1h-1zM344,603h2v1h-2zM553,603h2v1h-2zM346,604h1v1h-1zM552,604h1v1h-1zM347,605h2v1h-2zM550,605h2v1h-2zM349,606h1v1h-1zM549,606h1v1h-1zM350,607h2v1h-2zM547,607h2v1h-2zM352,608h2v1h-2zM545,608h2v1h-2zM354,609h1v1h-1zM544,609h1v1h-1zM355,610h2v1h-2zM542,610h2v1h-2zM357,611h2v1h-2zM540,611h2v1h-2zM359,612h2v1h-2zM538,612h2v1h-2zM361,613h2v1h-2zM536,613h2v1h-2zM363,614h2v1h-2zM534,614h2v1h-2zM365,615h2v1h-2zM532,615h2v1h-2zM367,616h2v1h-2zM530,616h2v1h-2zM369,617h2v1h-2zM528,617h2v1h-2zM371,618h2v1h-2zM526,618h2v1h-2zM373,619h3v1h-3zM524,619h2v1h-2zM376,620h2v1h-2zM521,620h3v1h-3zM378,621h2v1h-2zM519,621h2v1h-2zM380,622h3v1h-3zM516,622h3v1h-3zM383,623h3v1h-3zM513,623h3v1h-3zM386,624h3v1h-3zM510,624h3v1h-3zM389,625h3v1h-3zM507,625h3v1h-3zM392,626h3v1h-3zM504,626h3v1h-3zM395,627h3v1h-3zM501,627h3v1h-3zM398,628h4v1h-4zM497,628h4v1h-4zM402,629h4v1h-4zM493,629h4v1h-4zM406,630h5v1h-5zM488,630h5v1h-5zM411,631h5v1h-5zM483,631h5v1h-5zM416,632h6v1h-6zM477,632h6v1h-6zM422,633h8v1h-8zM469,633h8v1h-8zM430,634h19v1h-19zM450,634h19v1h-19zM449,635h1v1h-1z" fill="#ffaa80" stroke="none"/></g><rect x="426" y="72" width="47" height="13" fill="#000"/><rect x="429" y="258" width="41" height="13" fill="#000"/><text x="428.5" y="83" font-family="Liberation Sans" font-style="italic" font-weight="bold" font-size="11" fill="#ffff00">100 NMI</text><text x="431" y="268" font-family="Liberation Sans" font-style="italic" font-weight="bold" font-size="11" fill="#ffff00">50 NMI</text><rect x="873.5" y="87.5" width="20" height="714" fill="none" stroke="#7800ff" stroke-width="1"/><rect x="875" y="89" width="17" height="45" fill="#7800ff"/><rect x="875" y="134" width="17" height="45" fill="#e800ff"/><rect x="875" y="312" width="17" height="44" fill="#ff0000"/><rect x="875" y="356" width="17" height="45" fill="#d27d7d"/><rect x="875" y="401" width="17" height="44" fill="#d2c864"/><rect x="875" y="445" width="17" height="44" fill="#00b400"/><rect x="875" y="489" width="17" height="45" fill="#00fa96"/><rect x="875" y="534" width="17" height="44" fill="#008cff"/><rect x="875" y="578" width="17" height="44" fill="#e8e8e8"/><rect x="875" y="622" width="17" height="45" fill="#ffaaaa"/><rect x="875" y="667" width="17" height="44" fill="#787878"/><rect x="875" y="711" width="17" height="45" fill="#802424"/><path d="M888.5,14.5V6.5H894.5M894,7L890.5,10.5L894,14" fill="none" stroke="#ffff00" stroke-width="1"/><path d="M891.5,15L895,15L895,11.5Z" fill="#ffff00"/><path d="M852.5,116.5 L852.5,108.5 L856.5,108.5 L857.5,109.5 L857.5,112.5 L856.5,112.5 L852.5,112.5M854.5,112.5 L857.5,116.5M865.5,108.5 L860.5,108.5 L860.5,116.5M860.5,112.5 L863.5,112.5M852.5,153.5 L852.5,160.5 L853.5,161.5 L856.5,161.5 L857.5,160.5 L857.5,153.5M860.5,153.5 L860.5,161.5M865.5,153.5 L860.5,158.5M862.5,157.5 L865.5,161.5M852.5,330.5 L852.5,338.5M857.5,330.5 L857.5,338.5M852.5,334.5 L857.5,334.5M860.5,338.5 L860.5,332.5 L862.5,330.5 L863.5,330.5 L865.5,332.5 L865.5,338.5M860.5,335.5 L865.5,335.5M857.5,375.5 L856.5,374.5 L853.5,374.5 L852.5,375.5 L852.5,381.5 L853.5,382.5 L856.5,382.5 L857.5,381.5 L857.5,379.5 L854.5,379.5M860.5,382.5 L860.5,374.5 L864.5,374.5 L865.5,375.5 L865.5,378.5 L864.5,378.5 L860.5,378.5M862.5,378.5 L865.5,382.5M852.5,419.5 L852.5,427.5 L856.5,427.5 L857.5,426.5 L857.5,424.5 L856.5,423.5 L852.5,423.5M856.5,423.5 L857.5,422.5 L857.5,420.5 L856.5,419.5 L852.5,419.5M860.5,419.5 L860.5,427.5 L863.5,427.5 L865.5,425.5 L865.5,421.5 L863.5,419.5 L860.5,419.5M852.5,463.5 L852.5,471.5M857.5,463.5 L857.5,471.5M852.5,467.5 L857.5,467.5M860.5,471.5 L860.5,463.5 L864.5,463.5 L865.5,464.5 L865.5,467.5 L864.5,467.5 L860.5,467.5M862.5,467.5 L865.5,471.5M852.5,516.5 L852.5,508.5 L856.5,508.5 L857.5,509.5 L857.5,512.5 L856.5,512.5 L852.5,512.5M854.5,512.5 L857.5,516.5M860.5,516.5 L860.5,510.5 L862.5,508.5 L863.5,508.5 L865.5,510.5 L865.5,516.5M860.5,513.5 L865.5,513.5M852.5,552.5 L853.5,560.5 L854.5,555.5 L856.5,560.5 L857.5,552.5M865.5,553.5 L864.5,552.5 L861.5,552.5 L860.5,553.5 L860.5,555.5 L861.5,556.5 L864.5,556.5 L865.5,557.5 L865.5,559.5 L864.5,560.5 L861.5,560.5 L860.5,559.5M852.5,596.5 L852.5,604.5 L855.5,604.5 L857.5,602.5 L857.5,598.5 L855.5,596.5 L852.5,596.5M865.5,597.5 L864.5,596.5 L861.5,596.5 L860.5,597.5 L860.5,599.5 L861.5,600.5 L864.5,600.5 L865.5,601.5 L865.5,603.5 L864.5,604.5 L861.5,604.5 L860.5,603.5M852.5,641.5 L857.5,641.5M854.5,641.5 L854.5,649.5M852.5,649.5 L857.5,649.5M865.5,642.5 L864.5,641.5 L861.5,641.5 L860.5,642.5 L860.5,648.5 L861.5,649.5 L864.5,649.5 L865.5,648.5M857.5,686.5 L856.5,685.5 L853.5,685.5 L852.5,686.5 L852.5,692.5 L853.5,693.5 L856.5,693.5 L857.5,692.5 L857.5,690.5 L854.5,690.5M865.5,686.5 L864.5,685.5 L861.5,685.5 L860.5,686.5 L860.5,692.5 L861.5,693.5 L864.5,693.5 L865.5,692.5M852.5,729.5 L852.5,737.5 L856.5,737.5 L857.5,736.5 L857.5,734.5 L856.5,733.5 L852.5,733.5M856.5,733.5 L857.5,732.5 L857.5,730.5 L856.5,729.5 L852.5,729.5M860.5,729.5 L865.5,729.5M862.5,729.5 L862.5,737.5M860.5,737.5 L865.5,737.5M852.5,782.5 L852.5,774.5 L857.5,782.5 L857.5,774.5M860.5,774.5 L860.5,782.5 L863.5,782.5 L865.5,780.5 L865.5,776.5 L863.5,774.5 L860.5,774.5M868.5,55.5 L868.5,63.5M873.5,55.5 L873.5,63.5M868.5,59.5 L873.5,59.5M876.5,55.5 L876.5,63.5M881.5,55.5 L881.5,63.5M876.5,59.5 L881.5,59.5M889.5,56.5 L888.5,55.5 L885.5,55.5 L884.5,56.5 L884.5,62.5 L885.5,63.5 L888.5,63.5 L889.5,62.5M827.5,65.5 L825.5,65.5 L825.5,73.5 L827.5,73.5M834.5,66.5 L833.5,65.5 L830.5,65.5 L829.5,66.5 L829.5,72.5 L830.5,73.5 L833.5,73.5 L834.5,72.5M837.5,65.5 L837.5,73.5 L842.5,73.5M845.5,73.5 L845.5,67.5 L847.5,65.5 L848.5,65.5 L850.5,67.5 L850.5,73.5M845.5,70.5 L850.5,70.5M858.5,66.5 L857.5,65.5 L854.5,65.5 L853.5,66.5 L853.5,68.5 L854.5,69.5 L857.5,69.5 L858.5,70.5 L858.5,72.5 L857.5,73.5 L854.5,73.5 L853.5,72.5M863.5,65.5 L866.5,65.5 L866.5,73.5 L863.5,73.5M716.5,14.5 L716.5,7.5 L720.5,14.5 L720.5,7.5M727.5,7.5 L723.5,7.5 L723.5,14.5 L727.5,14.5M723.5,10.5 L726.5,10.5M730.5,7.5 L734.5,14.5M734.5,7.5 L730.5,14.5M737.5,7.5 L737.5,14.5 L741.5,14.5M744.5,14.5 L744.5,9.5 L745.5,7.5 L747.5,7.5 L748.5,9.5 L748.5,14.5M744.5,11.5 L748.5,11.5M751.5,7.5 L751.5,14.5 L754.5,14.5 L755.5,13.5 L755.5,11.5 L754.5,11.5 L751.5,11.5M754.5,11.5 L755.5,10.5 L755.5,8.5 L754.5,7.5 L751.5,7.5M759.5,11.5 L761.5,11.5M769.5,8.5 L768.5,7.5 L766.5,7.5 L765.5,8.5 L765.5,13.5 L766.5,14.5 L768.5,14.5 L769.5,13.5M773.5,10.5 L775.5,10.5 L776.5,11.5 L776.5,13.5 L775.5,14.5 L773.5,14.5 L772.5,13.5 L772.5,11.5 L773.5,10.5M781.5,7.5 L781.5,14.5M788.5,7.5 L788.5,14.5M793.5,12.5 L797.5,12.5 L797.5,11.5 L796.5,10.5 L794.5,10.5 L793.5,11.5 L793.5,13.5 L794.5,14.5 L797.5,14.5M804.5,10.5 L804.5,16.5 L803.5,17.5 L801.5,17.5M804.5,11.5 L803.5,10.5 L801.5,10.5 L800.5,11.5 L800.5,12.5 L801.5,13.5 L804.5,13.5M807.5,12.5 L811.5,12.5 L811.5,11.5 L810.5,10.5 L808.5,10.5 L807.5,11.5 L807.5,13.5 L808.5,14.5 L811.5,14.5M822.5,10.5 L824.5,10.5 L825.5,11.5 L825.5,13.5 L824.5,14.5 L822.5,14.5 L821.5,13.5 L821.5,11.5 L822.5,10.5M832.5,8.5 L831.5,7.5 L831.5,7.5 L830.5,8.5 L830.5,14.5M829.5,10.5 L831.5,10.5M842.5,7.5 L842.5,14.5 L845.5,14.5 L846.5,12.5 L846.5,9.5 L845.5,7.5 L842.5,7.5M849.5,10.5 L849.5,13.5 L850.5,14.5 L852.5,14.5 L853.5,13.5M853.5,10.5 L853.5,14.5M856.5,14.5 L856.5,7.5 L859.5,7.5 L860.5,8.5 L860.5,10.5 L859.5,11.5 L856.5,11.5M864.5,10.5 L866.5,10.5 L867.5,11.5 L867.5,14.5M867.5,11.5 L864.5,11.5 L863.5,12.5 L863.5,13.5 L864.5,14.5 L867.5,14.5M874.5,10.5 L874.5,16.5 L873.5,17.5 L871.5,17.5M874.5,11.5 L873.5,10.5 L871.5,10.5 L870.5,11.5 L870.5,12.5 L871.5,13.5 L874.5,13.5M877.5,12.5 L881.5,12.5 L881.5,11.5 L880.5,10.5 L878.5,10.5 L877.5,11.5 L877.5,13.5 L878.5,14.5 L881.5,14.5" fill="none" stroke="#ffff00" stroke-width="1" stroke-linecap="square" stroke-linejoin="miter" shape-rendering="crispEdges"/><path d="M235.5,889.5 L235.5,896.5M241.5,889.5 L241.5,896.5M235.5,892.5 L241.5,892.5M244.5,889.5 L247.5,893.5 L250.5,889.5M247.5,893.5 L247.5,896.5M253.5,889.5 L253.5,896.5 L257.5,896.5 L259.5,894.5 L259.5,891.5 L257.5,889.5 L253.5,889.5M262.5,896.5 L262.5,889.5 L267.5,889.5 L268.5,890.5 L268.5,892.5 L267.5,893.5 L262.5,893.5M265.5,893.5 L268.5,896.5M273.5,889.5 L275.5,889.5 L277.5,891.5 L277.5,894.5 L275.5,896.5 L273.5,896.5 L271.5,894.5 L271.5,891.5 L273.5,889.5M280.5,896.5 L280.5,889.5 L283.5,893.5 L286.5,889.5 L286.5,896.5M295.5,889.5 L289.5,889.5 L289.5,896.5 L295.5,896.5M289.5,892.5 L293.5,892.5M298.5,889.5 L304.5,889.5M301.5,889.5 L301.5,896.5M313.5,889.5 L307.5,889.5 L307.5,896.5 L313.5,896.5M307.5,892.5 L311.5,892.5M318.5,889.5 L320.5,889.5 L322.5,891.5 L322.5,894.5 L320.5,896.5 L318.5,896.5 L316.5,894.5 L316.5,891.5 L318.5,889.5M325.5,896.5 L325.5,889.5 L330.5,889.5 L331.5,890.5 L331.5,892.5 L330.5,893.5 L325.5,893.5M328.5,893.5 L331.5,896.5M349.5,890.5 L348.5,889.5 L344.5,889.5 L343.5,890.5 L343.5,895.5 L344.5,896.5 L348.5,896.5 L349.5,895.5M352.5,889.5 L352.5,896.5 L358.5,896.5M361.5,896.5 L361.5,891.5 L363.5,889.5 L365.5,889.5 L367.5,891.5 L367.5,896.5M361.5,893.5 L367.5,893.5M376.5,890.5 L375.5,889.5 L371.5,889.5 L370.5,890.5 L370.5,892.5 L371.5,893.5 L375.5,893.5 L376.5,893.5 L376.5,895.5 L375.5,896.5 L371.5,896.5 L370.5,895.5M385.5,890.5 L384.5,889.5 L380.5,889.5 L379.5,890.5 L379.5,892.5 L380.5,893.5 L384.5,893.5 L385.5,893.5 L385.5,895.5 L384.5,896.5 L380.5,896.5 L379.5,895.5M388.5,889.5 L394.5,889.5M391.5,889.5 L391.5,896.5M388.5,896.5 L394.5,896.5M403.5,889.5 L397.5,889.5 L397.5,896.5M397.5,892.5 L401.5,892.5M406.5,889.5 L412.5,889.5M409.5,889.5 L409.5,896.5M406.5,896.5 L412.5,896.5M421.5,890.5 L420.5,889.5 L416.5,889.5 L415.5,890.5 L415.5,895.5 L416.5,896.5 L420.5,896.5 L421.5,895.5M424.5,896.5 L424.5,891.5 L426.5,889.5 L428.5,889.5 L430.5,891.5 L430.5,896.5M424.5,893.5 L430.5,893.5M433.5,889.5 L439.5,889.5M436.5,889.5 L436.5,896.5M442.5,889.5 L448.5,889.5M445.5,889.5 L445.5,896.5M442.5,896.5 L448.5,896.5M453.5,889.5 L455.5,889.5 L457.5,891.5 L457.5,894.5 L455.5,896.5 L453.5,896.5 L451.5,894.5 L451.5,891.5 L453.5,889.5M460.5,896.5 L460.5,889.5 L466.5,896.5 L466.5,889.5M479.5,893.5 L483.5,893.5M496.5,889.5 L496.5,896.5M502.5,889.5 L496.5,893.5M498.5,892.5 L502.5,896.5M505.5,896.5 L505.5,891.5 L507.5,889.5 L509.5,889.5 L511.5,891.5 L511.5,896.5M505.5,893.5 L511.5,893.5M520.5,889.5 L514.5,889.5 L514.5,896.5 L520.5,896.5M514.5,892.5 L518.5,892.5M529.5,890.5 L528.5,889.5 L524.5,889.5 L523.5,890.5 L523.5,895.5 L524.5,896.5 L528.5,896.5 L529.5,895.5M547.5,893.5 L542.5,893.5 L541.5,892.5 L541.5,890.5 L542.5,889.5 L546.5,889.5 L547.5,890.5 L547.5,895.5 L546.5,896.5 L542.5,896.5M559.5,896.5 L559.5,889.5 L565.5,896.5 L565.5,889.5M570.5,889.5 L572.5,889.5 L574.5,891.5 L574.5,894.5 L572.5,896.5 L570.5,896.5 L568.5,894.5 L568.5,891.5 L570.5,889.5M577.5,889.5 L580.5,896.5 L583.5,889.5M595.5,890.5 L596.5,889.5 L600.5,889.5 L601.5,890.5 L601.5,892.5 L595.5,896.5 L601.5,896.5M610.5,889.5 L604.5,889.5 L604.5,893.5 L609.5,893.5 L610.5,893.5 L610.5,895.5 L609.5,896.5 L605.5,896.5 L604.5,895.5M623.5,891.5 L625.5,889.5 L625.5,896.5M623.5,896.5 L627.5,896.5M631.5,890.5 L632.5,889.5 L636.5,889.5 L637.5,890.5 L637.5,892.5 L631.5,896.5 L637.5,896.5M649.5,890.5 L650.5,889.5 L654.5,889.5 L655.5,890.5 L655.5,892.5 L654.5,893.5 L651.5,893.5M654.5,893.5 L655.5,893.5 L655.5,895.5 L654.5,896.5 L650.5,896.5 L649.5,895.5M658.5,889.5 L664.5,889.5 L660.5,896.5" fill="none" stroke="#f0f0f0" stroke-width="1" stroke-linecap="square" stroke-linejoin="miter" shape-rendering="crispEdges"/><path d="M643.0,891.0h1v1h-1zM643.0,895.0h1v1h-1z" fill="#f0f0f0" shape-rendering="crispEdges"/></svg>
</body></html>
